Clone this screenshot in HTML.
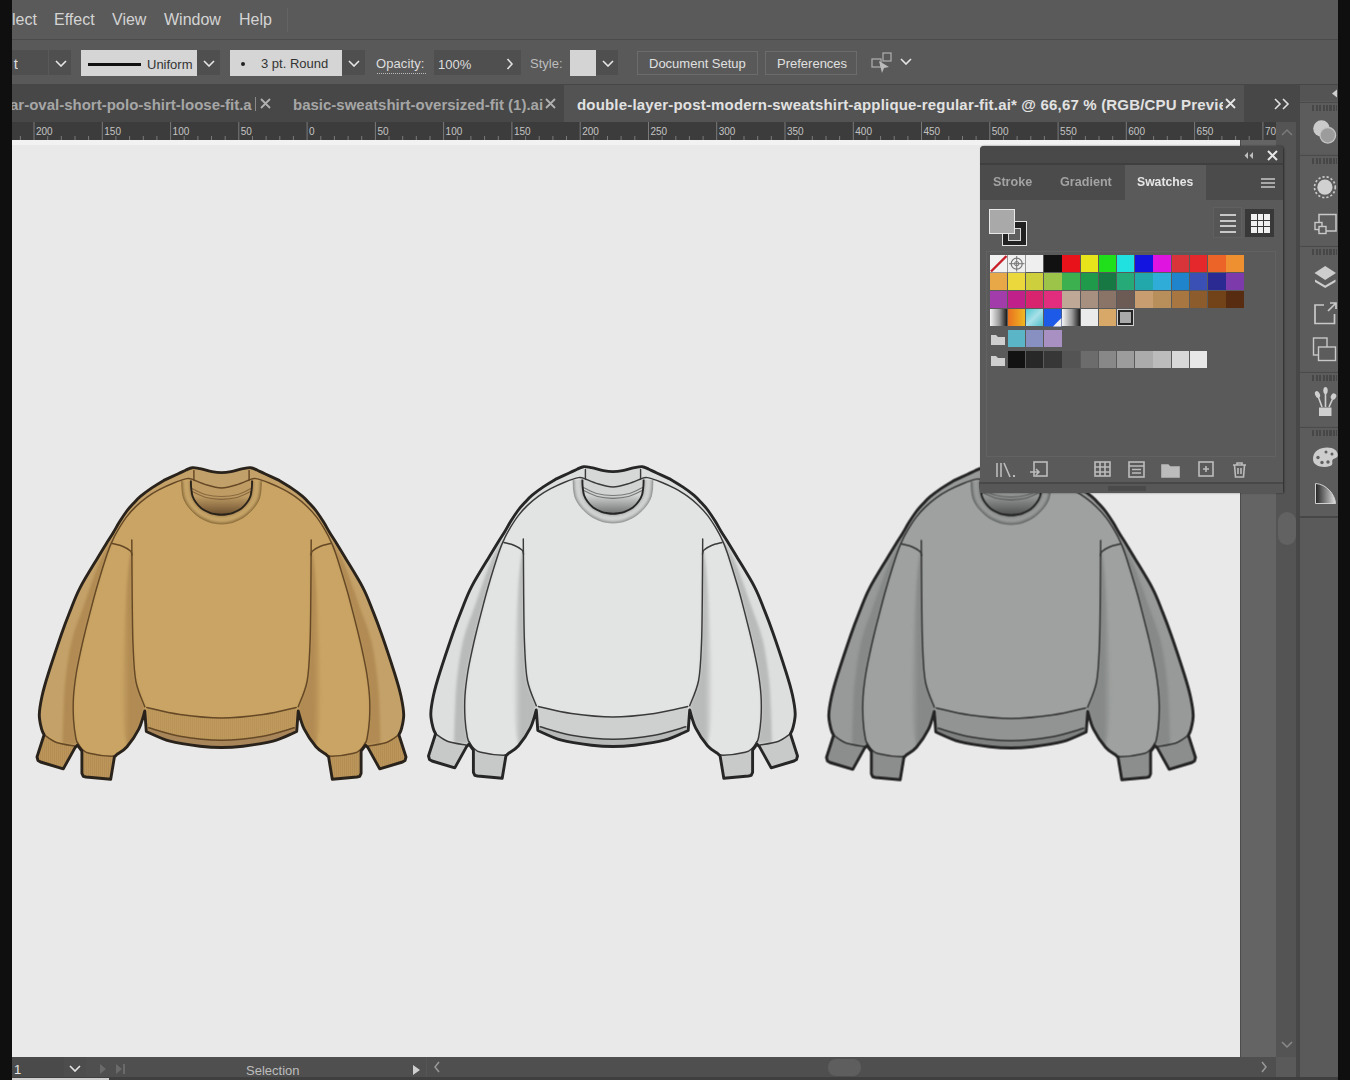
<!DOCTYPE html><html><head><meta charset="utf-8"><style>
*{margin:0;padding:0;box-sizing:border-box}
html,body{width:1350px;height:1080px;overflow:hidden;background:#0f0f0f;font-family:"Liberation Sans",sans-serif}
.a{position:absolute}
#menu{left:12px;top:0;width:1326px;height:40px;background:#5a5a5a;border-bottom:1px solid #4b4b4b}
#menu span{position:absolute;top:11px;font-size:16px;line-height:18px;color:#d4d4d4;white-space:nowrap}
#tool{left:12px;top:40px;width:1326px;height:45px;background:#595959;border-bottom:1px solid #464646}
.t13{font-size:13px;line-height:15px;white-space:nowrap;position:absolute}
#tabs{left:12px;top:85px;width:1326px;height:37px;background:#474747;overflow:hidden}
.tab{position:absolute;top:11px;font-size:15px;line-height:17px;font-weight:bold;color:#a6a6a6;white-space:nowrap}
#ruler{left:12px;top:122px;width:1264px;height:18px;background:#3c3c3c;overflow:hidden}
#canvas{left:12px;top:140px;width:1228px;height:917px;background:#e9e9e9;overflow:hidden}
#gray{left:1240px;top:140px;width:36px;height:917px;background:#646464;border-left:1px solid #4c4c4c}
#vscroll{left:1276px;top:122px;width:20px;height:935px;background:#545454}
#rpanel{left:1296px;top:85px;width:42px;height:995px;background:#5a5a5a;border-left:4px solid #474747}
#status{left:12px;top:1057px;width:1284px;height:23px;background:#4f4f4f}
</style></head><body><div id="root" class="a" style="left:0;top:0;width:1350px;height:1080px;overflow:hidden;background:#0f0f0f;filter:blur(0.45px)">
<div id="menu" class="a">
<span style="left:0px">lect</span>
<span style="left:42px">Effect</span>
<span style="left:100px">View</span>
<span style="left:152px">Window</span>
<span style="left:227px">Help</span>
<div class="a" style="left:275px;top:8px;width:1px;height:24px;background:#646464"></div>
</div>
<div id="tool" class="a">
<div class="a" style="left:0px;top:10px;width:36px;height:25px;background:#4f4f4f;"></div>
<div class="a" style="left:37px;top:10px;width:22px;height:25px;background:#4f4f4f;"></div>
<div class="a" style="left:0px;top:15px;font-size:15px;line-height:17px;color:#dcdcdc;width:6px;overflow:hidden;direction:rtl">t</div>
<svg class="a" style="left:43px;top:20px" width="12" height="7"><path d="M1 1 L6.0 6 L11 1" fill="none" stroke="#e6e6e6" stroke-width="1.6"/></svg>
<div class="a" style="left:69px;top:10px;width:116px;height:26px;background:#d5d5d5;"></div>
<div class="a" style="left:76px;top:23px;width:53px;height:3px;background:#111;"></div>
<div class="t13" style="left:135px;top:17px;color:#333">Uniform</div>
<div class="a" style="left:185px;top:10px;width:23px;height:25px;background:#4f4f4f;"></div>
<svg class="a" style="left:191px;top:20px" width="12" height="7"><path d="M1 1 L6.0 6 L11 1" fill="none" stroke="#e6e6e6" stroke-width="1.6"/></svg>
<div class="a" style="left:218px;top:10px;width:112px;height:26px;background:#d5d5d5;"></div>
<div class="a" style="left:229px;top:22px;width:4px;height:4px;border-radius:2px;background:#222"></div>
<div class="t13" style="left:249px;top:16px;color:#333">3 pt. Round</div>
<div class="a" style="left:330px;top:10px;width:23px;height:25px;background:#4f4f4f;"></div>
<svg class="a" style="left:336px;top:20px" width="12" height="7"><path d="M1 1 L6.0 6 L11 1" fill="none" stroke="#e6e6e6" stroke-width="1.6"/></svg>
<div class="t13" style="left:364px;top:16px;color:#dedede;letter-spacing:0.1px">Opacity:</div>
<div class="a" style="left:365px;top:33px;width:49px;height:0;border-top:1px dotted #bbb"></div>
<div class="a" style="left:422px;top:10px;width:64px;height:25px;background:#4f4f4f;"></div>
<div class="t13" style="left:426px;top:17px;color:#dedede">100%</div>
<div class="a" style="left:486px;top:10px;width:23px;height:25px;background:#4f4f4f;"></div>
<svg class="a" style="left:494px;top:18px" width="8" height="12"><path d="M1.5 1 L6 6 L1.5 11" fill="none" stroke="#e0e0e0" stroke-width="1.6"/></svg>
<div class="t13" style="left:518px;top:16px;color:#bdbdbd">Style:</div>
<div class="a" style="left:558px;top:10px;width:26px;height:26px;background:#d4d4d4;"></div>
<div class="a" style="left:584px;top:10px;width:22px;height:25px;background:#4f4f4f;"></div>
<svg class="a" style="left:590px;top:20px" width="12" height="7"><path d="M1 1 L6.0 6 L11 1" fill="none" stroke="#e6e6e6" stroke-width="1.6"/></svg>
<div class="a" style="left:625px;top:11px;width:121px;height:24px;background:transparent;border:1px solid #6c6c6c"></div>
<div class="t13" style="left:637px;top:16px;color:#e0e0e0">Document Setup</div>
<div class="a" style="left:753px;top:11px;width:92px;height:24px;background:transparent;border:1px solid #6c6c6c"></div>
<div class="t13" style="left:765px;top:16px;color:#e0e0e0">Preferences</div>
<svg class="a" style="left:859px;top:12px" width="24" height="22"><rect x="1" y="7" width="9" height="8" fill="none" stroke="#aaa" stroke-width="1.3"/><rect x="12" y="1" width="8" height="8" fill="none" stroke="#aaa" stroke-width="1.3"/><path d="M8 9 L18 15 L13 16 L11 21 Z" fill="#bbb"/></svg>
<svg class="a" style="left:888px;top:18px" width="12" height="7"><path d="M1 1 L6.0 6 L11 1" fill="none" stroke="#e6e6e6" stroke-width="1.6"/></svg>
</div>
<div id="tabs" class="a">
<div class="tab" style="left:-2px">ar-oval-short-polo-shirt-loose-fit.a</div>
<div class="a" style="left:243px;top:12px;width:1px;height:14px;background:#8a8a8a"></div>
<svg class="a" style="left:248px;top:13px" width="11" height="11"><path d="M1 1 L10 10 M10 1 L1 10" stroke="#b0b0b0" stroke-width="1.8"/></svg>
<div class="tab" style="left:281px">basic-sweatshirt-oversized-fit (1).ai</div>
<svg class="a" style="left:533px;top:13px" width="11" height="11"><path d="M1 1 L10 10 M10 1 L1 10" stroke="#b0b0b0" stroke-width="1.8"/></svg>
<div class="a" style="left:552px;top:0;width:680px;height:37px;background:#535353"></div>
<div class="a" style="left:552px;top:0;width:659px;height:37px;overflow:hidden"><div class="tab" style="left:13px;color:#e2e2e2;letter-spacing:0.18px">double-layer-post-modern-sweatshirt-applique-regular-fit.ai* @ 66,67 % (RGB/CPU Preview</div></div>
<svg class="a" style="left:1213px;top:13px" width="11" height="11"><path d="M1 1 L10 10 M10 1 L1 10" stroke="#e6e6e6" stroke-width="1.8"/></svg>
<svg class="a" style="left:1262px;top:13px" width="18" height="12"><path d="M1 1 L6 6 L1 11 M9 1 L14 6 L9 11" fill="none" stroke="#e0e0e0" stroke-width="1.6"/></svg>
</div>
<div id="ruler" class="a"><svg width="1264" height="18" style="position:absolute;left:0;top:0">
<line x1="-46.2" y1="0" x2="-46.2" y2="18" stroke="#7a7a7a" stroke-width="1"/><text x="-44.2" y="13" font-family="Liberation Sans" font-size="10" fill="#c4c4c4">250</text><line x1="-32.6" y1="14" x2="-32.6" y2="18" stroke="#7a7a7a" stroke-width="1"/><line x1="-18.9" y1="14" x2="-18.9" y2="18" stroke="#7a7a7a" stroke-width="1"/><line x1="-5.3" y1="14" x2="-5.3" y2="18" stroke="#7a7a7a" stroke-width="1"/><line x1="8.4" y1="14" x2="8.4" y2="18" stroke="#7a7a7a" stroke-width="1"/><line x1="22.0" y1="0" x2="22.0" y2="18" stroke="#7a7a7a" stroke-width="1"/><text x="24.0" y="13" font-family="Liberation Sans" font-size="10" fill="#c4c4c4">200</text><line x1="35.7" y1="14" x2="35.7" y2="18" stroke="#7a7a7a" stroke-width="1"/><line x1="49.3" y1="14" x2="49.3" y2="18" stroke="#7a7a7a" stroke-width="1"/><line x1="63.0" y1="14" x2="63.0" y2="18" stroke="#7a7a7a" stroke-width="1"/><line x1="76.6" y1="14" x2="76.6" y2="18" stroke="#7a7a7a" stroke-width="1"/><line x1="90.3" y1="0" x2="90.3" y2="18" stroke="#7a7a7a" stroke-width="1"/><text x="92.3" y="13" font-family="Liberation Sans" font-size="10" fill="#c4c4c4">150</text><line x1="103.9" y1="14" x2="103.9" y2="18" stroke="#7a7a7a" stroke-width="1"/><line x1="117.6" y1="14" x2="117.6" y2="18" stroke="#7a7a7a" stroke-width="1"/><line x1="131.3" y1="14" x2="131.3" y2="18" stroke="#7a7a7a" stroke-width="1"/><line x1="144.9" y1="14" x2="144.9" y2="18" stroke="#7a7a7a" stroke-width="1"/><line x1="158.6" y1="0" x2="158.6" y2="18" stroke="#7a7a7a" stroke-width="1"/><text x="160.6" y="13" font-family="Liberation Sans" font-size="10" fill="#c4c4c4">100</text><line x1="172.2" y1="14" x2="172.2" y2="18" stroke="#7a7a7a" stroke-width="1"/><line x1="185.9" y1="14" x2="185.9" y2="18" stroke="#7a7a7a" stroke-width="1"/><line x1="199.5" y1="14" x2="199.5" y2="18" stroke="#7a7a7a" stroke-width="1"/><line x1="213.2" y1="14" x2="213.2" y2="18" stroke="#7a7a7a" stroke-width="1"/><line x1="226.8" y1="0" x2="226.8" y2="18" stroke="#7a7a7a" stroke-width="1"/><text x="228.8" y="13" font-family="Liberation Sans" font-size="10" fill="#c4c4c4">50</text><line x1="240.5" y1="14" x2="240.5" y2="18" stroke="#7a7a7a" stroke-width="1"/><line x1="254.1" y1="14" x2="254.1" y2="18" stroke="#7a7a7a" stroke-width="1"/><line x1="267.8" y1="14" x2="267.8" y2="18" stroke="#7a7a7a" stroke-width="1"/><line x1="281.4" y1="14" x2="281.4" y2="18" stroke="#7a7a7a" stroke-width="1"/><line x1="295.1" y1="0" x2="295.1" y2="18" stroke="#7a7a7a" stroke-width="1"/><text x="297.1" y="13" font-family="Liberation Sans" font-size="10" fill="#c4c4c4">0</text><line x1="308.8" y1="14" x2="308.8" y2="18" stroke="#7a7a7a" stroke-width="1"/><line x1="322.4" y1="14" x2="322.4" y2="18" stroke="#7a7a7a" stroke-width="1"/><line x1="336.1" y1="14" x2="336.1" y2="18" stroke="#7a7a7a" stroke-width="1"/><line x1="349.7" y1="14" x2="349.7" y2="18" stroke="#7a7a7a" stroke-width="1"/><line x1="363.4" y1="0" x2="363.4" y2="18" stroke="#7a7a7a" stroke-width="1"/><text x="365.4" y="13" font-family="Liberation Sans" font-size="10" fill="#c4c4c4">50</text><line x1="377.0" y1="14" x2="377.0" y2="18" stroke="#7a7a7a" stroke-width="1"/><line x1="390.7" y1="14" x2="390.7" y2="18" stroke="#7a7a7a" stroke-width="1"/><line x1="404.3" y1="14" x2="404.3" y2="18" stroke="#7a7a7a" stroke-width="1"/><line x1="418.0" y1="14" x2="418.0" y2="18" stroke="#7a7a7a" stroke-width="1"/><line x1="431.6" y1="0" x2="431.6" y2="18" stroke="#7a7a7a" stroke-width="1"/><text x="433.6" y="13" font-family="Liberation Sans" font-size="10" fill="#c4c4c4">100</text><line x1="445.3" y1="14" x2="445.3" y2="18" stroke="#7a7a7a" stroke-width="1"/><line x1="458.9" y1="14" x2="458.9" y2="18" stroke="#7a7a7a" stroke-width="1"/><line x1="472.6" y1="14" x2="472.6" y2="18" stroke="#7a7a7a" stroke-width="1"/><line x1="486.3" y1="14" x2="486.3" y2="18" stroke="#7a7a7a" stroke-width="1"/><line x1="499.9" y1="0" x2="499.9" y2="18" stroke="#7a7a7a" stroke-width="1"/><text x="501.9" y="13" font-family="Liberation Sans" font-size="10" fill="#c4c4c4">150</text><line x1="513.6" y1="14" x2="513.6" y2="18" stroke="#7a7a7a" stroke-width="1"/><line x1="527.2" y1="14" x2="527.2" y2="18" stroke="#7a7a7a" stroke-width="1"/><line x1="540.9" y1="14" x2="540.9" y2="18" stroke="#7a7a7a" stroke-width="1"/><line x1="554.5" y1="14" x2="554.5" y2="18" stroke="#7a7a7a" stroke-width="1"/><line x1="568.2" y1="0" x2="568.2" y2="18" stroke="#7a7a7a" stroke-width="1"/><text x="570.2" y="13" font-family="Liberation Sans" font-size="10" fill="#c4c4c4">200</text><line x1="581.8" y1="14" x2="581.8" y2="18" stroke="#7a7a7a" stroke-width="1"/><line x1="595.5" y1="14" x2="595.5" y2="18" stroke="#7a7a7a" stroke-width="1"/><line x1="609.1" y1="14" x2="609.1" y2="18" stroke="#7a7a7a" stroke-width="1"/><line x1="622.8" y1="14" x2="622.8" y2="18" stroke="#7a7a7a" stroke-width="1"/><line x1="636.5" y1="0" x2="636.5" y2="18" stroke="#7a7a7a" stroke-width="1"/><text x="638.5" y="13" font-family="Liberation Sans" font-size="10" fill="#c4c4c4">250</text><line x1="650.1" y1="14" x2="650.1" y2="18" stroke="#7a7a7a" stroke-width="1"/><line x1="663.8" y1="14" x2="663.8" y2="18" stroke="#7a7a7a" stroke-width="1"/><line x1="677.4" y1="14" x2="677.4" y2="18" stroke="#7a7a7a" stroke-width="1"/><line x1="691.1" y1="14" x2="691.1" y2="18" stroke="#7a7a7a" stroke-width="1"/><line x1="704.7" y1="0" x2="704.7" y2="18" stroke="#7a7a7a" stroke-width="1"/><text x="706.7" y="13" font-family="Liberation Sans" font-size="10" fill="#c4c4c4">300</text><line x1="718.4" y1="14" x2="718.4" y2="18" stroke="#7a7a7a" stroke-width="1"/><line x1="732.0" y1="14" x2="732.0" y2="18" stroke="#7a7a7a" stroke-width="1"/><line x1="745.7" y1="14" x2="745.7" y2="18" stroke="#7a7a7a" stroke-width="1"/><line x1="759.3" y1="14" x2="759.3" y2="18" stroke="#7a7a7a" stroke-width="1"/><line x1="773.0" y1="0" x2="773.0" y2="18" stroke="#7a7a7a" stroke-width="1"/><text x="775.0" y="13" font-family="Liberation Sans" font-size="10" fill="#c4c4c4">350</text><line x1="786.6" y1="14" x2="786.6" y2="18" stroke="#7a7a7a" stroke-width="1"/><line x1="800.3" y1="14" x2="800.3" y2="18" stroke="#7a7a7a" stroke-width="1"/><line x1="814.0" y1="14" x2="814.0" y2="18" stroke="#7a7a7a" stroke-width="1"/><line x1="827.6" y1="14" x2="827.6" y2="18" stroke="#7a7a7a" stroke-width="1"/><line x1="841.3" y1="0" x2="841.3" y2="18" stroke="#7a7a7a" stroke-width="1"/><text x="843.3" y="13" font-family="Liberation Sans" font-size="10" fill="#c4c4c4">400</text><line x1="854.9" y1="14" x2="854.9" y2="18" stroke="#7a7a7a" stroke-width="1"/><line x1="868.6" y1="14" x2="868.6" y2="18" stroke="#7a7a7a" stroke-width="1"/><line x1="882.2" y1="14" x2="882.2" y2="18" stroke="#7a7a7a" stroke-width="1"/><line x1="895.9" y1="14" x2="895.9" y2="18" stroke="#7a7a7a" stroke-width="1"/><line x1="909.5" y1="0" x2="909.5" y2="18" stroke="#7a7a7a" stroke-width="1"/><text x="911.5" y="13" font-family="Liberation Sans" font-size="10" fill="#c4c4c4">450</text><line x1="923.2" y1="14" x2="923.2" y2="18" stroke="#7a7a7a" stroke-width="1"/><line x1="936.8" y1="14" x2="936.8" y2="18" stroke="#7a7a7a" stroke-width="1"/><line x1="950.5" y1="14" x2="950.5" y2="18" stroke="#7a7a7a" stroke-width="1"/><line x1="964.1" y1="14" x2="964.1" y2="18" stroke="#7a7a7a" stroke-width="1"/><line x1="977.8" y1="0" x2="977.8" y2="18" stroke="#7a7a7a" stroke-width="1"/><text x="979.8" y="13" font-family="Liberation Sans" font-size="10" fill="#c4c4c4">500</text><line x1="991.5" y1="14" x2="991.5" y2="18" stroke="#7a7a7a" stroke-width="1"/><line x1="1005.1" y1="14" x2="1005.1" y2="18" stroke="#7a7a7a" stroke-width="1"/><line x1="1018.8" y1="14" x2="1018.8" y2="18" stroke="#7a7a7a" stroke-width="1"/><line x1="1032.4" y1="14" x2="1032.4" y2="18" stroke="#7a7a7a" stroke-width="1"/><line x1="1046.1" y1="0" x2="1046.1" y2="18" stroke="#7a7a7a" stroke-width="1"/><text x="1048.1" y="13" font-family="Liberation Sans" font-size="10" fill="#c4c4c4">550</text><line x1="1059.7" y1="14" x2="1059.7" y2="18" stroke="#7a7a7a" stroke-width="1"/><line x1="1073.4" y1="14" x2="1073.4" y2="18" stroke="#7a7a7a" stroke-width="1"/><line x1="1087.0" y1="14" x2="1087.0" y2="18" stroke="#7a7a7a" stroke-width="1"/><line x1="1100.7" y1="14" x2="1100.7" y2="18" stroke="#7a7a7a" stroke-width="1"/><line x1="1114.3" y1="0" x2="1114.3" y2="18" stroke="#7a7a7a" stroke-width="1"/><text x="1116.3" y="13" font-family="Liberation Sans" font-size="10" fill="#c4c4c4">600</text><line x1="1128.0" y1="14" x2="1128.0" y2="18" stroke="#7a7a7a" stroke-width="1"/><line x1="1141.6" y1="14" x2="1141.6" y2="18" stroke="#7a7a7a" stroke-width="1"/><line x1="1155.3" y1="14" x2="1155.3" y2="18" stroke="#7a7a7a" stroke-width="1"/><line x1="1169.0" y1="14" x2="1169.0" y2="18" stroke="#7a7a7a" stroke-width="1"/><line x1="1182.6" y1="0" x2="1182.6" y2="18" stroke="#7a7a7a" stroke-width="1"/><text x="1184.6" y="13" font-family="Liberation Sans" font-size="10" fill="#c4c4c4">650</text><line x1="1196.3" y1="14" x2="1196.3" y2="18" stroke="#7a7a7a" stroke-width="1"/><line x1="1209.9" y1="14" x2="1209.9" y2="18" stroke="#7a7a7a" stroke-width="1"/><line x1="1223.6" y1="14" x2="1223.6" y2="18" stroke="#7a7a7a" stroke-width="1"/><line x1="1237.2" y1="14" x2="1237.2" y2="18" stroke="#7a7a7a" stroke-width="1"/><line x1="1250.9" y1="0" x2="1250.9" y2="18" stroke="#7a7a7a" stroke-width="1"/><text x="1252.9" y="13" font-family="Liberation Sans" font-size="10" fill="#c4c4c4">700</text><line x1="1264.5" y1="14" x2="1264.5" y2="18" stroke="#7a7a7a" stroke-width="1"/><line x1="1278.2" y1="14" x2="1278.2" y2="18" stroke="#7a7a7a" stroke-width="1"/><line x1="1291.8" y1="14" x2="1291.8" y2="18" stroke="#7a7a7a" stroke-width="1"/><line x1="1305.5" y1="14" x2="1305.5" y2="18" stroke="#7a7a7a" stroke-width="1"/>
</svg></div>
<div id="canvas" class="a"><div class="a" style="left:0;top:0;width:1228px;height:5px;background:#f2f2f2"></div>
<svg class="a" style="left:-12px;top:-140px" width="1240" height="1057" viewBox="0 0 1240 1057"><g transform="translate(0.00 0.00)"><defs><linearGradient id="fst" gradientUnits="userSpaceOnUse" x1="121" x2="135" y1="0" y2="0"><stop offset="0" stop-color="#b18b53" stop-opacity="0"/><stop offset="0.6" stop-color="#b18b53"/><stop offset="1" stop-color="#b18b53"/></linearGradient><linearGradient id="nkt" gradientUnits="userSpaceOnUse" x1="0" x2="0" y1="486" y2="515"><stop offset="0" stop-color="#bf9c64"/><stop offset="0.35" stop-color="#bf9c64"/><stop offset="1" stop-color="#6a4e2e"/></linearGradient><pattern id="rbt" patternUnits="userSpaceOnUse" width="2" height="10"><rect x="0" y="0" width="0.7" height="10" fill="#654826" opacity="0.10"/></pattern><filter id="blt" x="-20%" y="-20%" width="140%" height="140%"><feGaussianBlur stdDeviation="1.1"/></filter></defs><defs><clipPath id="cpt"><path d="M163.8 480.4 C166.1 479.3 174.0 475.7 177.7 474.0 C181.4 472.3 183.6 471.1 186.0 470.0 C188.4 468.9 190.0 467.9 192.3 467.7 C194.6 467.5 196.7 468.0 200.0 468.6 C203.3 469.2 208.4 470.9 212.0 471.6 C215.6 472.3 218.3 472.6 221.5 472.6 C224.7 472.6 227.4 472.3 231.0 471.6 C234.6 470.9 239.7 469.2 243.0 468.6 C246.3 468.0 248.4 467.5 250.7 467.7 C253.0 467.9 254.6 468.9 257.0 470.0 C259.4 471.1 261.6 472.3 265.3 474.0 C269.0 475.7 276.9 479.3 279.2 480.4 C281.2 481.6 287.3 485.3 291.2 487.9 C295.1 490.5 299.2 493.6 302.3 496.2 C305.4 498.8 307.4 501.1 309.7 503.6 C312.0 506.1 313.9 507.9 316.2 511.0 C318.5 514.1 321.3 518.4 323.6 522.1 C325.9 525.8 327.9 529.7 330.1 533.2 C332.3 536.8 334.2 539.5 336.6 543.4 C339.0 547.3 340.1 549.1 344.5 556.5 C348.9 563.9 358.2 578.6 363.0 587.8 C367.8 597.0 370.1 604.2 373.2 611.9 C376.3 619.6 377.9 623.8 381.5 634.0 C385.1 644.2 391.2 662.6 394.5 673.0 C397.8 683.4 399.5 689.3 401.0 696.3 C402.5 703.3 403.6 709.4 403.7 714.8 C403.8 720.2 402.3 725.4 401.5 728.7 C400.7 732.0 399.3 733.8 398.9 734.8 L406.0 757.0 L405.0 760.5 L402.5 762.0 L379.7 768.9 L367.8 747.4 L365.6 745.2 L361.1 751.0 L361.1 773.3 L359.7 776.3 L357.0 777.0 L332.3 779.3 L328.6 757.0 L325.6 754.0 C324.0 752.8 319.6 750.9 316.0 746.7 C312.4 742.5 307.1 734.9 304.1 728.9 C301.1 722.9 299.2 714.0 298.2 711.0 L296.7 731.5 C292.8 733.1 281.9 738.8 273.0 741.2 C264.1 743.7 251.6 745.2 243.0 746.2 C234.4 747.2 228.7 747.5 221.5 747.5 C214.3 747.5 208.6 747.2 200.0 746.2 C191.4 745.2 178.9 743.7 170.0 741.2 C161.1 738.8 150.2 733.1 146.3 731.5 L144.8 711.0 C143.8 714.0 141.9 722.9 138.9 728.9 C135.9 734.9 130.6 742.5 127.0 746.7 C123.4 750.9 119.0 752.8 117.4 754.0 L114.4 757.0 L110.7 779.3 L86.0 777.0 L83.3 776.3 L81.9 773.3 L81.9 751.0 L77.4 745.2 L75.2 747.4 L63.3 768.9 L40.5 762.0 L38.0 760.5 L37.0 757.0 L44.1 734.8 C43.7 733.8 42.3 732.0 41.5 728.7 C40.7 725.4 39.2 720.2 39.3 714.8 C39.4 709.4 40.5 703.3 42.0 696.3 C43.5 689.3 45.2 683.4 48.5 673.0 C51.8 662.6 58.0 644.2 61.5 634.0 C65.0 623.8 66.7 619.6 69.8 611.9 C72.9 604.2 75.2 597.0 80.0 587.8 C84.8 578.6 94.1 563.9 98.5 556.5 C102.9 549.1 104.0 547.3 106.4 543.4 C108.8 539.5 110.7 536.8 112.9 533.2 C115.1 529.7 117.1 525.8 119.4 522.1 C121.7 518.4 124.5 514.1 126.8 511.0 C129.1 507.9 131.0 506.1 133.3 503.6 C135.6 501.1 137.6 498.8 140.7 496.2 C143.8 493.6 148.0 490.5 151.8 487.9 C155.7 485.3 161.8 481.6 163.8 480.4 Z"/></clipPath></defs><path d="M163.8 480.4 C166.1 479.3 174.0 475.7 177.7 474.0 C181.4 472.3 183.6 471.1 186.0 470.0 C188.4 468.9 190.0 467.9 192.3 467.7 C194.6 467.5 196.7 468.0 200.0 468.6 C203.3 469.2 208.4 470.9 212.0 471.6 C215.6 472.3 218.3 472.6 221.5 472.6 C224.7 472.6 227.4 472.3 231.0 471.6 C234.6 470.9 239.7 469.2 243.0 468.6 C246.3 468.0 248.4 467.5 250.7 467.7 C253.0 467.9 254.6 468.9 257.0 470.0 C259.4 471.1 261.6 472.3 265.3 474.0 C269.0 475.7 276.9 479.3 279.2 480.4 C281.2 481.6 287.3 485.3 291.2 487.9 C295.1 490.5 299.2 493.6 302.3 496.2 C305.4 498.8 307.4 501.1 309.7 503.6 C312.0 506.1 313.9 507.9 316.2 511.0 C318.5 514.1 321.3 518.4 323.6 522.1 C325.9 525.8 327.9 529.7 330.1 533.2 C332.3 536.8 334.2 539.5 336.6 543.4 C339.0 547.3 340.1 549.1 344.5 556.5 C348.9 563.9 358.2 578.6 363.0 587.8 C367.8 597.0 370.1 604.2 373.2 611.9 C376.3 619.6 377.9 623.8 381.5 634.0 C385.1 644.2 391.2 662.6 394.5 673.0 C397.8 683.4 399.5 689.3 401.0 696.3 C402.5 703.3 403.6 709.4 403.7 714.8 C403.8 720.2 402.3 725.4 401.5 728.7 C400.7 732.0 399.3 733.8 398.9 734.8 L406.0 757.0 L405.0 760.5 L402.5 762.0 L379.7 768.9 L367.8 747.4 L365.6 745.2 L361.1 751.0 L361.1 773.3 L359.7 776.3 L357.0 777.0 L332.3 779.3 L328.6 757.0 L325.6 754.0 C324.0 752.8 319.6 750.9 316.0 746.7 C312.4 742.5 307.1 734.9 304.1 728.9 C301.1 722.9 299.2 714.0 298.2 711.0 L296.7 731.5 C292.8 733.1 281.9 738.8 273.0 741.2 C264.1 743.7 251.6 745.2 243.0 746.2 C234.4 747.2 228.7 747.5 221.5 747.5 C214.3 747.5 208.6 747.2 200.0 746.2 C191.4 745.2 178.9 743.7 170.0 741.2 C161.1 738.8 150.2 733.1 146.3 731.5 L144.8 711.0 C143.8 714.0 141.9 722.9 138.9 728.9 C135.9 734.9 130.6 742.5 127.0 746.7 C123.4 750.9 119.0 752.8 117.4 754.0 L114.4 757.0 L110.7 779.3 L86.0 777.0 L83.3 776.3 L81.9 773.3 L81.9 751.0 L77.4 745.2 L75.2 747.4 L63.3 768.9 L40.5 762.0 L38.0 760.5 L37.0 757.0 L44.1 734.8 C43.7 733.8 42.3 732.0 41.5 728.7 C40.7 725.4 39.2 720.2 39.3 714.8 C39.4 709.4 40.5 703.3 42.0 696.3 C43.5 689.3 45.2 683.4 48.5 673.0 C51.8 662.6 58.0 644.2 61.5 634.0 C65.0 623.8 66.7 619.6 69.8 611.9 C72.9 604.2 75.2 597.0 80.0 587.8 C84.8 578.6 94.1 563.9 98.5 556.5 C102.9 549.1 104.0 547.3 106.4 543.4 C108.8 539.5 110.7 536.8 112.9 533.2 C115.1 529.7 117.1 525.8 119.4 522.1 C121.7 518.4 124.5 514.1 126.8 511.0 C129.1 507.9 131.0 506.1 133.3 503.6 C135.6 501.1 137.6 498.8 140.7 496.2 C143.8 493.6 148.0 490.5 151.8 487.9 C155.7 485.3 161.8 481.6 163.8 480.4 Z" fill="#c9a464"/><path d="M163.8 480.4 C161.8 481.6 155.7 485.3 151.8 487.9 C148.0 490.5 143.8 493.6 140.7 496.2 C137.6 498.8 135.6 501.1 133.3 503.6 C131.0 506.1 129.1 507.9 126.8 511.0 C124.5 514.1 121.7 518.4 119.4 522.1 C117.1 525.8 115.1 529.7 112.9 533.2 C110.7 536.8 108.8 539.5 106.4 543.4 C104.0 547.3 102.9 549.1 98.5 556.5 C94.1 563.9 84.8 578.6 80.0 587.8 C75.2 597.0 72.9 604.2 69.8 611.9 C66.7 619.6 65.0 623.8 61.5 634.0 C58.0 644.2 51.8 662.6 48.5 673.0 C45.2 683.4 43.5 689.3 42.0 696.3 C40.5 703.3 39.4 709.4 39.3 714.8 C39.2 720.2 40.7 725.4 41.5 728.7 C42.3 732.0 43.7 733.8 44.1 734.8 L75.2 747.4 L78.5 744.5 C78.1 743.5 76.7 742.7 75.9 738.5 C75.1 734.3 73.9 726.4 73.5 719.4 C73.1 712.4 73.0 704.0 73.5 696.3 C74.0 688.6 75.1 680.7 76.3 673.0 C77.5 665.3 79.5 656.5 80.9 650.0 C82.3 643.5 83.0 640.4 84.6 634.0 C86.1 627.6 88.2 619.6 90.2 611.9 C92.2 604.2 93.9 597.5 96.7 587.8 C99.5 578.1 104.6 561.6 107.3 553.6 C110.0 545.6 110.9 544.0 112.9 539.7 C114.9 535.4 117.1 531.6 119.4 527.7 C121.7 523.9 124.0 520.2 126.8 516.6 C129.6 513.0 132.6 509.6 136.0 506.4 C139.4 503.1 143.2 499.9 147.1 497.1 C151.0 494.3 157.2 490.9 159.2 489.7 Z" fill="#c4a168" /><path d="M163.8 480.4 C161.8 481.6 155.7 485.3 151.8 487.9 C148.0 490.5 143.8 493.6 140.7 496.2 C137.6 498.8 135.6 501.1 133.3 503.6 C131.0 506.1 129.1 507.9 126.8 511.0 C124.5 514.1 121.7 518.4 119.4 522.1 C117.1 525.8 115.1 529.7 112.9 533.2 C110.7 536.8 108.8 539.5 106.4 543.4 C104.0 547.3 102.9 549.1 98.5 556.5 C94.1 563.9 84.8 578.6 80.0 587.8 C75.2 597.0 72.9 604.2 69.8 611.9 C66.7 619.6 65.0 623.8 61.5 634.0 C58.0 644.2 51.8 662.6 48.5 673.0 C45.2 683.4 43.5 689.3 42.0 696.3 C40.5 703.3 39.4 709.4 39.3 714.8 C39.2 720.2 40.7 725.4 41.5 728.7 C42.3 732.0 43.7 733.8 44.1 734.8 L75.2 747.4 L78.5 744.5 C78.1 743.5 76.7 742.7 75.9 738.5 C75.1 734.3 73.9 726.4 73.5 719.4 C73.1 712.4 73.0 704.0 73.5 696.3 C74.0 688.6 75.1 680.7 76.3 673.0 C77.5 665.3 79.5 656.5 80.9 650.0 C82.3 643.5 83.0 640.4 84.6 634.0 C86.1 627.6 88.2 619.6 90.2 611.9 C92.2 604.2 93.9 597.5 96.7 587.8 C99.5 578.1 104.6 561.6 107.3 553.6 C110.0 545.6 110.9 544.0 112.9 539.7 C114.9 535.4 117.1 531.6 119.4 527.7 C121.7 523.9 124.0 520.2 126.8 516.6 C129.6 513.0 132.6 509.6 136.0 506.4 C139.4 503.1 143.2 499.9 147.1 497.1 C151.0 494.3 157.2 490.9 159.2 489.7 Z" fill="#c4a168"  transform="matrix(-1 0 0 1 443.0 0)"/><path d="M163.8 480.4 C166.1 479.3 174.0 475.7 177.7 474.0 C181.4 472.3 183.6 471.1 186.0 470.0 C188.4 468.9 191.2 468.1 192.3 467.7 L193.5 479.7 C192.4 479.5 190.4 478.0 187.0 478.6 C183.6 479.2 177.7 481.4 173.1 483.2 C168.5 485.0 161.5 488.6 159.2 489.7 Z" fill="#c4a168" /><path d="M163.8 480.4 C166.1 479.3 174.0 475.7 177.7 474.0 C181.4 472.3 183.6 471.1 186.0 470.0 C188.4 468.9 191.2 468.1 192.3 467.7 L193.5 479.7 C192.4 479.5 190.4 478.0 187.0 478.6 C183.6 479.2 177.7 481.4 173.1 483.2 C168.5 485.0 161.5 488.6 159.2 489.7 Z" fill="#c4a168"  transform="matrix(-1 0 0 1 443.0 0)"/><g clip-path="url(#cpt)"><g filter="url(#blt)"><path d="M112.9 539.7 C112.0 542.0 110.0 545.6 107.3 553.6 C104.6 561.6 99.5 578.1 96.7 587.8 C93.9 597.5 92.2 604.2 90.2 611.9 C88.2 619.6 86.1 627.6 84.6 634.0 C83.0 640.4 82.3 643.5 80.9 650.0 C79.5 656.5 77.5 665.3 76.3 673.0 C75.1 680.7 74.0 688.6 73.5 696.3 C73.0 704.0 73.1 712.4 73.5 719.4 C73.9 726.4 75.2 734.2 75.9 738.5 C76.6 742.8 77.2 743.9 77.4 745.0 L62.5 743.5 C62.7 738.2 63.0 722.6 63.5 712.0 C64.0 701.4 64.1 692.0 65.5 680.0 C66.9 668.0 68.9 652.5 72.0 640.0 C75.1 627.5 79.7 617.3 84.0 605.0 C88.3 592.7 94.0 575.8 98.0 566.0 C102.0 556.2 105.5 550.4 108.0 546.0 C110.5 541.6 112.1 540.8 112.9 539.7 Z" fill="#b18b53" /><path d="M112.9 539.7 C112.0 542.0 110.0 545.6 107.3 553.6 C104.6 561.6 99.5 578.1 96.7 587.8 C93.9 597.5 92.2 604.2 90.2 611.9 C88.2 619.6 86.1 627.6 84.6 634.0 C83.0 640.4 82.3 643.5 80.9 650.0 C79.5 656.5 77.5 665.3 76.3 673.0 C75.1 680.7 74.0 688.6 73.5 696.3 C73.0 704.0 73.1 712.4 73.5 719.4 C73.9 726.4 75.2 734.2 75.9 738.5 C76.6 742.8 77.2 743.9 77.4 745.0 L62.5 743.5 C62.7 738.2 63.0 722.6 63.5 712.0 C64.0 701.4 64.1 692.0 65.5 680.0 C66.9 668.0 68.9 652.5 72.0 640.0 C75.1 627.5 79.7 617.3 84.0 605.0 C88.3 592.7 94.0 575.8 98.0 566.0 C102.0 556.2 105.5 550.4 108.0 546.0 C110.5 541.6 112.1 540.8 112.9 539.7 Z" fill="#b18b53"  transform="matrix(-1 0 0 1 443.0 0)"/><path d="M132.1 552.0 C132.1 560.0 132.0 584.6 132.2 600.0 C132.3 615.4 132.4 630.8 133.0 644.4 C133.6 658.0 133.9 671.1 135.9 681.5 C137.9 691.9 143.3 702.5 144.8 706.7 C143.8 710.4 141.9 722.2 138.9 728.9 C135.9 735.6 129.0 743.7 127.0 746.7 C126.4 743.1 124.2 734.5 123.5 725.0 C122.8 715.5 122.4 704.2 122.5 690.0 C122.6 675.8 123.3 656.7 124.0 640.0 C124.7 623.3 125.5 604.0 126.5 590.0 C127.5 576.0 129.1 562.3 130.0 556.0 C130.9 549.7 131.8 552.7 132.1 552.0 Z" fill="url(#fst)" /><path d="M132.1 552.0 C132.1 560.0 132.0 584.6 132.2 600.0 C132.3 615.4 132.4 630.8 133.0 644.4 C133.6 658.0 133.9 671.1 135.9 681.5 C137.9 691.9 143.3 702.5 144.8 706.7 C143.8 710.4 141.9 722.2 138.9 728.9 C135.9 735.6 129.0 743.7 127.0 746.7 C126.4 743.1 124.2 734.5 123.5 725.0 C122.8 715.5 122.4 704.2 122.5 690.0 C122.6 675.8 123.3 656.7 124.0 640.0 C124.7 623.3 125.5 604.0 126.5 590.0 C127.5 576.0 129.1 562.3 130.0 556.0 C130.9 549.7 131.8 552.7 132.1 552.0 Z" fill="url(#fst)"  transform="matrix(-1 0 0 1 443.0 0)"/></g></g><path d="M44.1 734.8 L37.0 757.0 L38.0 760.5 L40.5 762.0 L63.3 768.9 L75.2 747.4 L77.4 745.2 C76.9 745.3 78.0 746.5 74.4 746.0 C70.8 745.5 61.0 744.1 55.9 742.2 C50.8 740.3 46.1 736.0 44.1 734.8 Z" fill="#bb9559" /><path d="M44.1 734.8 L37.0 757.0 L38.0 760.5 L40.5 762.0 L63.3 768.9 L75.2 747.4 L77.4 745.2 C76.9 745.3 78.0 746.5 74.4 746.0 C70.8 745.5 61.0 744.1 55.9 742.2 C50.8 740.3 46.1 736.0 44.1 734.8 Z" fill="#bb9559"  transform="matrix(-1 0 0 1 443.0 0)"/><path d="M81.9 751.0 L81.9 773.3 L83.3 776.3 L86.0 777.0 L110.7 779.3 L114.4 757.0 L117.4 754.0 C116.4 754.4 116.2 756.4 111.5 756.3 C106.8 756.2 94.2 754.5 89.3 753.3 C84.4 752.1 84.0 750.8 82.0 749.0 C80.0 747.2 78.2 743.6 77.4 742.5 Z" fill="#bb9559" /><path d="M81.9 751.0 L81.9 773.3 L83.3 776.3 L86.0 777.0 L110.7 779.3 L114.4 757.0 L117.4 754.0 C116.4 754.4 116.2 756.4 111.5 756.3 C106.8 756.2 94.2 754.5 89.3 753.3 C84.4 752.1 84.0 750.8 82.0 749.0 C80.0 747.2 78.2 743.6 77.4 742.5 Z" fill="#bb9559"  transform="matrix(-1 0 0 1 443.0 0)"/><path d="M81.9 751.0 L81.9 773.3 L83.3 776.3 L86.0 777.0 L110.7 779.3 L114.4 757.0 L117.4 754.0 C116.4 754.4 116.2 756.4 111.5 756.3 C106.8 756.2 94.2 754.5 89.3 753.3 C84.4 752.1 84.0 750.8 82.0 749.0 C80.0 747.2 78.2 743.6 77.4 742.5 Z" fill="url(#rbt)" /><path d="M81.9 751.0 L81.9 773.3 L83.3 776.3 L86.0 777.0 L110.7 779.3 L114.4 757.0 L117.4 754.0 C116.4 754.4 116.2 756.4 111.5 756.3 C106.8 756.2 94.2 754.5 89.3 753.3 C84.4 752.1 84.0 750.8 82.0 749.0 C80.0 747.2 78.2 743.6 77.4 742.5 Z" fill="url(#rbt)"  transform="matrix(-1 0 0 1 443.0 0)"/><path d="M44.1 734.8 L37.0 757.0 L38.0 760.5 L40.5 762.0 L63.3 768.9 L75.2 747.4 L77.4 745.2 C76.9 745.3 78.0 746.5 74.4 746.0 C70.8 745.5 61.0 744.1 55.9 742.2 C50.8 740.3 46.1 736.0 44.1 734.8 Z" fill="url(#rbt)" /><path d="M44.1 734.8 L37.0 757.0 L38.0 760.5 L40.5 762.0 L63.3 768.9 L75.2 747.4 L77.4 745.2 C76.9 745.3 78.0 746.5 74.4 746.0 C70.8 745.5 61.0 744.1 55.9 742.2 C50.8 740.3 46.1 736.0 44.1 734.8 Z" fill="url(#rbt)"  transform="matrix(-1 0 0 1 443.0 0)"/><path d="M146.8 707.5 C152.3 708.7 167.6 712.8 180.0 714.5 C192.4 716.2 207.7 718.0 221.5 718.0 C235.3 718.0 250.6 716.2 263.0 714.5 C275.4 712.8 290.7 708.7 296.2 707.5 L296.7 731.5 C292.8 733.1 281.9 738.8 273.0 741.2 C264.1 743.7 251.6 745.2 243.0 746.2 C234.4 747.2 228.7 747.5 221.5 747.5 C214.3 747.5 208.6 747.2 200.0 746.2 C191.4 745.2 178.9 743.7 170.0 741.2 C161.1 738.8 150.2 733.1 146.3 731.5 Z" fill="#c09a5c"/><path d="M146.8 707.5 C152.3 708.7 167.6 712.8 180.0 714.5 C192.4 716.2 207.7 718.0 221.5 718.0 C235.3 718.0 250.6 716.2 263.0 714.5 C275.4 712.8 290.7 708.7 296.2 707.5 L296.7 731.5 C292.8 733.1 281.9 738.8 273.0 741.2 C264.1 743.7 251.6 745.2 243.0 746.2 C234.4 747.2 228.7 747.5 221.5 747.5 C214.3 747.5 208.6 747.2 200.0 746.2 C191.4 745.2 178.9 743.7 170.0 741.2 C161.1 738.8 150.2 733.1 146.3 731.5 Z" fill="url(#rbt)"/><path d="M148.7 727.8 C153.9 729.2 167.9 734.1 180.0 736.2 C192.1 738.3 207.7 740.2 221.5 740.2 C235.3 740.2 250.9 738.3 263.0 736.2 C275.1 734.1 289.1 729.2 294.3 727.8 L296.7 731.5 C292.8 733.1 281.9 738.8 273.0 741.2 C264.1 743.7 251.6 745.2 243.0 746.2 C234.4 747.2 228.7 747.5 221.5 747.5 C214.3 747.5 208.6 747.2 200.0 746.2 C191.4 745.2 178.9 743.7 170.0 741.2 C161.1 738.8 150.2 733.1 146.3 731.5 Z" fill="#a8865a"/><path d="M193.5 468.0 C194.8 468.2 197.9 468.5 201.0 469.2 C204.1 469.9 208.6 471.4 212.0 472.0 C215.4 472.6 218.3 473.0 221.5 473.0 C224.7 473.0 227.6 472.6 231.0 472.0 C234.4 471.4 238.9 469.9 242.0 469.2 C245.1 468.5 248.2 468.2 249.5 468.0 L249.5 479.7 C247.2 480.6 240.7 483.6 236.0 485.0 C231.3 486.4 226.3 487.9 221.5 487.9 C216.7 487.9 211.7 486.4 207.0 485.0 C202.3 483.6 195.8 480.6 193.5 479.7 Z" fill="#c2a06a"/><path d="M190.9 480.5 C190.9 481.8 190.9 485.4 191.2 488.0 C191.5 490.6 191.7 493.6 192.5 496.0 C193.3 498.4 194.5 500.4 196.0 502.5 C197.5 504.6 199.3 506.7 201.6 508.4 C203.9 510.1 207.6 511.8 210.0 512.8 C212.4 513.8 214.1 513.9 216.0 514.2 C217.9 514.5 219.7 514.7 221.5 514.7 C223.3 514.7 225.1 514.5 227.0 514.2 C228.9 513.9 230.6 513.8 233.0 512.8 C235.4 511.8 239.1 510.1 241.4 508.4 C243.7 506.7 245.5 504.6 247.0 502.5 C248.5 500.4 249.7 498.4 250.5 496.0 C251.3 493.6 251.5 490.6 251.8 488.0 C252.1 485.4 252.1 481.8 252.1 480.5 L249.5 479.7 C247.2 480.6 240.7 483.6 236.0 485.0 C231.3 486.4 226.3 487.9 221.5 487.9 C216.7 487.9 211.7 486.4 207.0 485.0 C202.3 483.6 195.8 480.6 193.5 479.7 Z" fill="url(#nkt)"/><defs><clipPath id="rct"><path d="M181.6 481.0 C181.7 482.5 181.7 487.2 182.0 490.0 C182.3 492.8 182.6 495.5 183.4 498.0 C184.2 500.5 185.5 502.7 187.0 505.0 C188.5 507.3 190.3 509.5 192.5 511.6 C194.7 513.7 197.1 515.9 200.0 517.7 C202.9 519.5 207.3 521.3 210.0 522.3 C212.7 523.3 214.1 523.2 216.0 523.5 C217.9 523.8 219.7 524.0 221.5 524.0 C223.3 524.0 225.1 523.8 227.0 523.5 C228.9 523.2 230.3 523.3 233.0 522.3 C235.7 521.3 240.1 519.5 243.0 517.7 C245.9 515.9 248.3 513.7 250.5 511.6 C252.7 509.5 254.5 507.3 256.0 505.0 C257.5 502.7 258.8 500.5 259.6 498.0 C260.4 495.5 260.7 492.8 261.0 490.0 C261.3 487.2 261.3 482.5 261.4 481.0 L252.1 480.5 C252.1 481.8 252.1 485.4 251.8 488.0 C251.5 490.6 251.3 493.6 250.5 496.0 C249.7 498.4 248.5 500.4 247.0 502.5 C245.5 504.6 243.7 506.7 241.4 508.4 C239.1 510.1 235.4 511.8 233.0 512.8 C230.6 513.8 228.9 513.9 227.0 514.2 C225.1 514.5 223.3 514.7 221.5 514.7 C219.7 514.7 217.9 514.5 216.0 514.2 C214.1 513.9 212.4 513.8 210.0 512.8 C207.6 511.8 203.9 510.1 201.6 508.4 C199.3 506.7 197.5 504.6 196.0 502.5 C194.5 500.4 193.3 498.4 192.5 496.0 C191.7 493.6 191.5 490.6 191.2 488.0 C190.9 485.4 190.9 481.8 190.9 480.5 Z"/></clipPath></defs><path d="M181.6 481.0 C181.7 482.5 181.7 487.2 182.0 490.0 C182.3 492.8 182.6 495.5 183.4 498.0 C184.2 500.5 185.5 502.7 187.0 505.0 C188.5 507.3 190.3 509.5 192.5 511.6 C194.7 513.7 197.1 515.9 200.0 517.7 C202.9 519.5 207.3 521.3 210.0 522.3 C212.7 523.3 214.1 523.2 216.0 523.5 C217.9 523.8 219.7 524.0 221.5 524.0 C223.3 524.0 225.1 523.8 227.0 523.5 C228.9 523.2 230.3 523.3 233.0 522.3 C235.7 521.3 240.1 519.5 243.0 517.7 C245.9 515.9 248.3 513.7 250.5 511.6 C252.7 509.5 254.5 507.3 256.0 505.0 C257.5 502.7 258.8 500.5 259.6 498.0 C260.4 495.5 260.7 492.8 261.0 490.0 C261.3 487.2 261.3 482.5 261.4 481.0 L252.1 480.5 C252.1 481.8 252.1 485.4 251.8 488.0 C251.5 490.6 251.3 493.6 250.5 496.0 C249.7 498.4 248.5 500.4 247.0 502.5 C245.5 504.6 243.7 506.7 241.4 508.4 C239.1 510.1 235.4 511.8 233.0 512.8 C230.6 513.8 228.9 513.9 227.0 514.2 C225.1 514.5 223.3 514.7 221.5 514.7 C219.7 514.7 217.9 514.5 216.0 514.2 C214.1 513.9 212.4 513.8 210.0 512.8 C207.6 511.8 203.9 510.1 201.6 508.4 C199.3 506.7 197.5 504.6 196.0 502.5 C194.5 500.4 193.3 498.4 192.5 496.0 C191.7 493.6 191.5 490.6 191.2 488.0 C190.9 485.4 190.9 481.8 190.9 480.5 Z" fill="#c6a468"/><g clip-path="url(#rct)" filter="url(#blt)"><path d="M181.6 481.0 C181.7 482.5 181.7 487.2 182.0 490.0 C182.3 492.8 182.6 495.5 183.4 498.0 C184.2 500.5 185.5 502.7 187.0 505.0 C188.5 507.3 190.3 509.5 192.5 511.6 C194.7 513.7 197.1 515.9 200.0 517.7 C202.9 519.5 207.3 521.3 210.0 522.3 C212.7 523.3 214.1 523.2 216.0 523.5 C217.9 523.8 219.7 524.0 221.5 524.0 C223.3 524.0 225.1 523.8 227.0 523.5 C228.9 523.2 230.3 523.3 233.0 522.3 C235.7 521.3 240.1 519.5 243.0 517.7 C245.9 515.9 248.3 513.7 250.5 511.6 C252.7 509.5 254.5 507.3 256.0 505.0 C257.5 502.7 258.8 500.5 259.6 498.0 C260.4 495.5 260.7 492.8 261.0 490.0 C261.3 487.2 261.3 482.5 261.4 481.0" fill="none" stroke="#8a6a3a" stroke-width="3.2" opacity="0.8"/><path d="M190.9 480.5 C190.9 481.8 190.9 485.4 191.2 488.0 C191.5 490.6 191.7 493.6 192.5 496.0 C193.3 498.4 194.5 500.4 196.0 502.5 C197.5 504.6 199.3 506.7 201.6 508.4 C203.9 510.1 207.6 511.8 210.0 512.8 C212.4 513.8 214.1 513.9 216.0 514.2 C217.9 514.5 219.7 514.7 221.5 514.7 C223.3 514.7 225.1 514.5 227.0 514.2 C228.9 513.9 230.6 513.8 233.0 512.8 C235.4 511.8 239.1 510.1 241.4 508.4 C243.7 506.7 245.5 504.6 247.0 502.5 C248.5 500.4 249.7 498.4 250.5 496.0 C251.3 493.6 251.5 490.6 251.8 488.0 C252.1 485.4 252.1 481.8 252.1 480.5" fill="none" stroke="#8a6a3a" stroke-width="3.5" opacity="0.6"/></g><path d="M181.6 481.0 C181.7 482.5 181.7 487.2 182.0 490.0 C182.3 492.8 182.6 495.5 183.4 498.0 C184.2 500.5 185.5 502.7 187.0 505.0 C188.5 507.3 190.3 509.5 192.5 511.6 C194.7 513.7 197.1 515.9 200.0 517.7 C202.9 519.5 207.3 521.3 210.0 522.3 C212.7 523.3 214.1 523.2 216.0 523.5 C217.9 523.8 219.7 524.0 221.5 524.0 C223.3 524.0 225.1 523.8 227.0 523.5 C228.9 523.2 230.3 523.3 233.0 522.3 C235.7 521.3 240.1 519.5 243.0 517.7 C245.9 515.9 248.3 513.7 250.5 511.6 C252.7 509.5 254.5 507.3 256.0 505.0 C257.5 502.7 258.8 500.5 259.6 498.0 C260.4 495.5 260.7 492.8 261.0 490.0 C261.3 487.2 261.3 482.5 261.4 481.0" fill="none" stroke="#8a6a3a" stroke-width="1" opacity="0.8"/><g fill="none" stroke="#654826" stroke-width="1.45" stroke-linecap="round"><path d="M78.5 744.5 C78.1 743.5 76.7 742.7 75.9 738.5 C75.1 734.3 73.9 726.4 73.5 719.4 C73.1 712.4 73.0 704.0 73.5 696.3 C74.0 688.6 75.1 680.7 76.3 673.0 C77.5 665.3 79.5 656.5 80.9 650.0 C82.3 643.5 83.0 640.4 84.6 634.0 C86.1 627.6 88.2 619.6 90.2 611.9 C92.2 604.2 93.9 597.5 96.7 587.8 C99.5 578.1 104.6 561.6 107.3 553.6 C110.0 545.6 110.9 544.0 112.9 539.7 C114.9 535.4 117.1 531.6 119.4 527.7 C121.7 523.9 124.0 520.2 126.8 516.6 C129.6 513.0 132.6 509.6 136.0 506.4 C139.4 503.1 143.2 499.9 147.1 497.1 C151.0 494.3 154.9 492.0 159.2 489.7 C163.5 487.4 168.5 485.0 173.1 483.2 C177.7 481.4 183.6 479.2 187.0 478.6 C190.4 478.0 192.4 479.5 193.5 479.7 C195.8 480.6 202.3 483.6 207.0 485.0 C211.7 486.4 216.7 487.9 221.5 487.9 C226.3 487.9 231.3 486.4 236.0 485.0 C240.7 483.6 247.2 480.6 249.5 479.7 C250.6 479.5 252.6 478.0 256.0 478.6 C259.4 479.2 265.3 481.4 269.9 483.2 C274.5 485.0 279.5 487.4 283.8 489.7 C288.1 492.0 292.0 494.3 295.9 497.1 C299.8 499.9 303.6 503.1 307.0 506.4 C310.4 509.6 313.4 513.0 316.2 516.6 C319.0 520.2 321.3 523.9 323.6 527.7 C325.9 531.6 328.1 535.4 330.1 539.7 C332.1 544.0 333.0 545.6 335.7 553.6 C338.4 561.6 343.4 578.1 346.3 587.8 C349.2 597.5 350.8 604.2 352.8 611.9 C354.8 619.6 356.8 627.6 358.4 634.0 C359.9 640.4 360.7 643.5 362.1 650.0 C363.5 656.5 365.5 665.3 366.7 673.0 C367.9 680.7 369.0 688.6 369.5 696.3 C370.0 704.0 369.9 712.4 369.5 719.4 C369.1 726.4 367.9 734.3 367.1 738.5 C366.3 742.7 364.9 743.5 364.5 744.5"/><path d="M131.8 540.0 C131.9 550.0 132.0 582.6 132.2 600.0 C132.4 617.4 132.4 630.8 133.0 644.4 C133.6 658.0 133.9 671.1 135.9 681.5 C137.9 691.9 143.3 702.5 144.8 706.7 M311.2 540.0 C311.1 550.0 311.0 582.6 310.8 600.0 C310.6 617.4 310.6 630.8 310.0 644.4 C309.4 658.0 309.1 671.1 307.1 681.5 C305.1 691.9 299.7 702.5 298.2 706.7"/><path d="M112.5 543.5 C114.2 544.0 120.0 545.2 123.0 546.5 C126.0 547.8 129.0 549.6 130.5 551.0 C132.0 552.4 131.8 554.3 132.0 555.0 M330.5 543.5 C328.8 544.0 323.0 545.2 320.0 546.5 C317.0 547.8 314.0 549.6 312.5 551.0 C311.0 552.4 311.2 554.3 311.0 555.0"/><path d="M146.8 707.5 C152.3 708.7 167.6 712.8 180.0 714.5 C192.4 716.2 207.7 718.0 221.5 718.0 C235.3 718.0 250.6 716.2 263.0 714.5 C275.4 712.8 290.7 708.7 296.2 707.5"/><path d="M148.7 727.8 C153.9 729.2 167.9 734.1 180.0 736.2 C192.1 738.3 207.7 740.2 221.5 740.2 C235.3 740.2 250.9 738.3 263.0 736.2 C275.1 734.1 289.1 729.2 294.3 727.8"/><path d="M193.9 470.5 V480 M249.1 470.5 V480"/><path d="M77.4 742.5 C78.2 743.6 80.0 747.2 82.0 749.0 C84.0 750.8 84.4 752.1 89.3 753.3 C94.2 754.5 106.8 756.2 111.5 756.3 C116.2 756.4 116.4 754.4 117.4 754.0 M365.6 742.5 C364.8 743.6 363.0 747.2 361.0 749.0 C359.0 750.8 358.6 752.1 353.7 753.3 C348.8 754.5 336.2 756.2 331.5 756.3 C326.8 756.4 326.6 754.4 325.6 754.0"/><path d="M44.1 734.8 C46.1 736.0 50.8 740.3 55.9 742.2 C61.0 744.1 71.3 745.4 74.4 746.0 M398.9 734.8 C396.9 736.0 392.2 740.3 387.1 742.2 C382.1 744.1 371.7 745.4 368.6 746.0"/><path d="M192.0 488.5 C194.2 489.5 200.1 493.2 205.0 494.5 C209.9 495.8 216.0 496.5 221.5 496.5 C227.0 496.5 233.1 495.8 238.0 494.5 C242.9 493.2 248.8 489.5 251.0 488.5" stroke-width="1.16" opacity="0.6"/><path d="M192.3 491.5 C194.6 492.5 201.1 496.2 206.0 497.5 C210.9 498.8 216.3 499.3 221.5 499.3 C226.7 499.3 232.1 498.8 237.0 497.5 C241.9 496.2 248.4 492.5 250.7 491.5" stroke-width="1.16" opacity="0.6"/></g><path d="M190.9 480.5 C190.9 481.8 190.9 485.4 191.2 488.0 C191.5 490.6 191.7 493.6 192.5 496.0 C193.3 498.4 194.5 500.4 196.0 502.5 C197.5 504.6 199.3 506.7 201.6 508.4 C203.9 510.1 207.6 511.8 210.0 512.8 C212.4 513.8 214.1 513.9 216.0 514.2 C217.9 514.5 219.7 514.7 221.5 514.7 C223.3 514.7 225.1 514.5 227.0 514.2 C228.9 513.9 230.6 513.8 233.0 512.8 C235.4 511.8 239.1 510.1 241.4 508.4 C243.7 506.7 245.5 504.6 247.0 502.5 C248.5 500.4 249.7 498.4 250.5 496.0 C251.3 493.6 251.5 490.6 251.8 488.0 C252.1 485.4 252.1 481.8 252.1 480.5" fill="none" stroke="#2a231b" stroke-width="1.885"/><path d="M163.8 480.4 C166.1 479.3 174.0 475.7 177.7 474.0 C181.4 472.3 183.6 471.1 186.0 470.0 C188.4 468.9 190.0 467.9 192.3 467.7 C194.6 467.5 196.7 468.0 200.0 468.6 C203.3 469.2 208.4 470.9 212.0 471.6 C215.6 472.3 218.3 472.6 221.5 472.6 C224.7 472.6 227.4 472.3 231.0 471.6 C234.6 470.9 239.7 469.2 243.0 468.6 C246.3 468.0 248.4 467.5 250.7 467.7 C253.0 467.9 254.6 468.9 257.0 470.0 C259.4 471.1 261.6 472.3 265.3 474.0 C269.0 475.7 276.9 479.3 279.2 480.4 C281.2 481.6 287.3 485.3 291.2 487.9 C295.1 490.5 299.2 493.6 302.3 496.2 C305.4 498.8 307.4 501.1 309.7 503.6 C312.0 506.1 313.9 507.9 316.2 511.0 C318.5 514.1 321.3 518.4 323.6 522.1 C325.9 525.8 327.9 529.7 330.1 533.2 C332.3 536.8 334.2 539.5 336.6 543.4 C339.0 547.3 340.1 549.1 344.5 556.5 C348.9 563.9 358.2 578.6 363.0 587.8 C367.8 597.0 370.1 604.2 373.2 611.9 C376.3 619.6 377.9 623.8 381.5 634.0 C385.1 644.2 391.2 662.6 394.5 673.0 C397.8 683.4 399.5 689.3 401.0 696.3 C402.5 703.3 403.6 709.4 403.7 714.8 C403.8 720.2 402.3 725.4 401.5 728.7 C400.7 732.0 399.3 733.8 398.9 734.8 L406.0 757.0 L405.0 760.5 L402.5 762.0 L379.7 768.9 L367.8 747.4 L365.6 745.2 L361.1 751.0 L361.1 773.3 L359.7 776.3 L357.0 777.0 L332.3 779.3 L328.6 757.0 L325.6 754.0 C324.0 752.8 319.6 750.9 316.0 746.7 C312.4 742.5 307.1 734.9 304.1 728.9 C301.1 722.9 299.2 714.0 298.2 711.0 L296.7 731.5 C292.8 733.1 281.9 738.8 273.0 741.2 C264.1 743.7 251.6 745.2 243.0 746.2 C234.4 747.2 228.7 747.5 221.5 747.5 C214.3 747.5 208.6 747.2 200.0 746.2 C191.4 745.2 178.9 743.7 170.0 741.2 C161.1 738.8 150.2 733.1 146.3 731.5 L144.8 711.0 C143.8 714.0 141.9 722.9 138.9 728.9 C135.9 734.9 130.6 742.5 127.0 746.7 C123.4 750.9 119.0 752.8 117.4 754.0 L114.4 757.0 L110.7 779.3 L86.0 777.0 L83.3 776.3 L81.9 773.3 L81.9 751.0 L77.4 745.2 L75.2 747.4 L63.3 768.9 L40.5 762.0 L38.0 760.5 L37.0 757.0 L44.1 734.8 C43.7 733.8 42.3 732.0 41.5 728.7 C40.7 725.4 39.2 720.2 39.3 714.8 C39.4 709.4 40.5 703.3 42.0 696.3 C43.5 689.3 45.2 683.4 48.5 673.0 C51.8 662.6 58.0 644.2 61.5 634.0 C65.0 623.8 66.7 619.6 69.8 611.9 C72.9 604.2 75.2 597.0 80.0 587.8 C84.8 578.6 94.1 563.9 98.5 556.5 C102.9 549.1 104.0 547.3 106.4 543.4 C108.8 539.5 110.7 536.8 112.9 533.2 C115.1 529.7 117.1 525.8 119.4 522.1 C121.7 518.4 124.5 514.1 126.8 511.0 C129.1 507.9 131.0 506.1 133.3 503.6 C135.6 501.1 137.6 498.8 140.7 496.2 C143.8 493.6 148.0 490.5 151.8 487.9 C155.7 485.3 161.8 481.6 163.8 480.4 Z" fill="none" stroke="#2a231b" stroke-width="2.9" stroke-linejoin="round"/></g><g transform="translate(391.50 -1.00)"><defs><linearGradient id="fsw" gradientUnits="userSpaceOnUse" x1="121" x2="135" y1="0" y2="0"><stop offset="0" stop-color="#b9bbba" stop-opacity="0"/><stop offset="0.6" stop-color="#b9bbba"/><stop offset="1" stop-color="#b9bbba"/></linearGradient><linearGradient id="nkw" gradientUnits="userSpaceOnUse" x1="0" x2="0" y1="486" y2="515"><stop offset="0" stop-color="#d2d4d3"/><stop offset="0.35" stop-color="#d2d4d3"/><stop offset="1" stop-color="#707271"/></linearGradient><pattern id="rbw" patternUnits="userSpaceOnUse" width="2" height="10"><rect x="0" y="0" width="0.7" height="10" fill="#3a3a3a" opacity="0.10"/></pattern><filter id="blw" x="-20%" y="-20%" width="140%" height="140%"><feGaussianBlur stdDeviation="1.1"/></filter></defs><defs><clipPath id="cpw"><path d="M163.8 480.4 C166.1 479.3 174.0 475.7 177.7 474.0 C181.4 472.3 183.6 471.1 186.0 470.0 C188.4 468.9 190.0 467.9 192.3 467.7 C194.6 467.5 196.7 468.0 200.0 468.6 C203.3 469.2 208.4 470.9 212.0 471.6 C215.6 472.3 218.3 472.6 221.5 472.6 C224.7 472.6 227.4 472.3 231.0 471.6 C234.6 470.9 239.7 469.2 243.0 468.6 C246.3 468.0 248.4 467.5 250.7 467.7 C253.0 467.9 254.6 468.9 257.0 470.0 C259.4 471.1 261.6 472.3 265.3 474.0 C269.0 475.7 276.9 479.3 279.2 480.4 C281.2 481.6 287.3 485.3 291.2 487.9 C295.1 490.5 299.2 493.6 302.3 496.2 C305.4 498.8 307.4 501.1 309.7 503.6 C312.0 506.1 313.9 507.9 316.2 511.0 C318.5 514.1 321.3 518.4 323.6 522.1 C325.9 525.8 327.9 529.7 330.1 533.2 C332.3 536.8 334.2 539.5 336.6 543.4 C339.0 547.3 340.1 549.1 344.5 556.5 C348.9 563.9 358.2 578.6 363.0 587.8 C367.8 597.0 370.1 604.2 373.2 611.9 C376.3 619.6 377.9 623.8 381.5 634.0 C385.1 644.2 391.2 662.6 394.5 673.0 C397.8 683.4 399.5 689.3 401.0 696.3 C402.5 703.3 403.6 709.4 403.7 714.8 C403.8 720.2 402.3 725.4 401.5 728.7 C400.7 732.0 399.3 733.8 398.9 734.8 L406.0 757.0 L405.0 760.5 L402.5 762.0 L379.7 768.9 L367.8 747.4 L365.6 745.2 L361.1 751.0 L361.1 773.3 L359.7 776.3 L357.0 777.0 L332.3 779.3 L328.6 757.0 L325.6 754.0 C324.0 752.8 319.6 750.9 316.0 746.7 C312.4 742.5 307.1 734.9 304.1 728.9 C301.1 722.9 299.2 714.0 298.2 711.0 L296.7 731.5 C292.8 733.1 281.9 738.8 273.0 741.2 C264.1 743.7 251.6 745.2 243.0 746.2 C234.4 747.2 228.7 747.5 221.5 747.5 C214.3 747.5 208.6 747.2 200.0 746.2 C191.4 745.2 178.9 743.7 170.0 741.2 C161.1 738.8 150.2 733.1 146.3 731.5 L144.8 711.0 C143.8 714.0 141.9 722.9 138.9 728.9 C135.9 734.9 130.6 742.5 127.0 746.7 C123.4 750.9 119.0 752.8 117.4 754.0 L114.4 757.0 L110.7 779.3 L86.0 777.0 L83.3 776.3 L81.9 773.3 L81.9 751.0 L77.4 745.2 L75.2 747.4 L63.3 768.9 L40.5 762.0 L38.0 760.5 L37.0 757.0 L44.1 734.8 C43.7 733.8 42.3 732.0 41.5 728.7 C40.7 725.4 39.2 720.2 39.3 714.8 C39.4 709.4 40.5 703.3 42.0 696.3 C43.5 689.3 45.2 683.4 48.5 673.0 C51.8 662.6 58.0 644.2 61.5 634.0 C65.0 623.8 66.7 619.6 69.8 611.9 C72.9 604.2 75.2 597.0 80.0 587.8 C84.8 578.6 94.1 563.9 98.5 556.5 C102.9 549.1 104.0 547.3 106.4 543.4 C108.8 539.5 110.7 536.8 112.9 533.2 C115.1 529.7 117.1 525.8 119.4 522.1 C121.7 518.4 124.5 514.1 126.8 511.0 C129.1 507.9 131.0 506.1 133.3 503.6 C135.6 501.1 137.6 498.8 140.7 496.2 C143.8 493.6 148.0 490.5 151.8 487.9 C155.7 485.3 161.8 481.6 163.8 480.4 Z"/></clipPath></defs><path d="M163.8 480.4 C166.1 479.3 174.0 475.7 177.7 474.0 C181.4 472.3 183.6 471.1 186.0 470.0 C188.4 468.9 190.0 467.9 192.3 467.7 C194.6 467.5 196.7 468.0 200.0 468.6 C203.3 469.2 208.4 470.9 212.0 471.6 C215.6 472.3 218.3 472.6 221.5 472.6 C224.7 472.6 227.4 472.3 231.0 471.6 C234.6 470.9 239.7 469.2 243.0 468.6 C246.3 468.0 248.4 467.5 250.7 467.7 C253.0 467.9 254.6 468.9 257.0 470.0 C259.4 471.1 261.6 472.3 265.3 474.0 C269.0 475.7 276.9 479.3 279.2 480.4 C281.2 481.6 287.3 485.3 291.2 487.9 C295.1 490.5 299.2 493.6 302.3 496.2 C305.4 498.8 307.4 501.1 309.7 503.6 C312.0 506.1 313.9 507.9 316.2 511.0 C318.5 514.1 321.3 518.4 323.6 522.1 C325.9 525.8 327.9 529.7 330.1 533.2 C332.3 536.8 334.2 539.5 336.6 543.4 C339.0 547.3 340.1 549.1 344.5 556.5 C348.9 563.9 358.2 578.6 363.0 587.8 C367.8 597.0 370.1 604.2 373.2 611.9 C376.3 619.6 377.9 623.8 381.5 634.0 C385.1 644.2 391.2 662.6 394.5 673.0 C397.8 683.4 399.5 689.3 401.0 696.3 C402.5 703.3 403.6 709.4 403.7 714.8 C403.8 720.2 402.3 725.4 401.5 728.7 C400.7 732.0 399.3 733.8 398.9 734.8 L406.0 757.0 L405.0 760.5 L402.5 762.0 L379.7 768.9 L367.8 747.4 L365.6 745.2 L361.1 751.0 L361.1 773.3 L359.7 776.3 L357.0 777.0 L332.3 779.3 L328.6 757.0 L325.6 754.0 C324.0 752.8 319.6 750.9 316.0 746.7 C312.4 742.5 307.1 734.9 304.1 728.9 C301.1 722.9 299.2 714.0 298.2 711.0 L296.7 731.5 C292.8 733.1 281.9 738.8 273.0 741.2 C264.1 743.7 251.6 745.2 243.0 746.2 C234.4 747.2 228.7 747.5 221.5 747.5 C214.3 747.5 208.6 747.2 200.0 746.2 C191.4 745.2 178.9 743.7 170.0 741.2 C161.1 738.8 150.2 733.1 146.3 731.5 L144.8 711.0 C143.8 714.0 141.9 722.9 138.9 728.9 C135.9 734.9 130.6 742.5 127.0 746.7 C123.4 750.9 119.0 752.8 117.4 754.0 L114.4 757.0 L110.7 779.3 L86.0 777.0 L83.3 776.3 L81.9 773.3 L81.9 751.0 L77.4 745.2 L75.2 747.4 L63.3 768.9 L40.5 762.0 L38.0 760.5 L37.0 757.0 L44.1 734.8 C43.7 733.8 42.3 732.0 41.5 728.7 C40.7 725.4 39.2 720.2 39.3 714.8 C39.4 709.4 40.5 703.3 42.0 696.3 C43.5 689.3 45.2 683.4 48.5 673.0 C51.8 662.6 58.0 644.2 61.5 634.0 C65.0 623.8 66.7 619.6 69.8 611.9 C72.9 604.2 75.2 597.0 80.0 587.8 C84.8 578.6 94.1 563.9 98.5 556.5 C102.9 549.1 104.0 547.3 106.4 543.4 C108.8 539.5 110.7 536.8 112.9 533.2 C115.1 529.7 117.1 525.8 119.4 522.1 C121.7 518.4 124.5 514.1 126.8 511.0 C129.1 507.9 131.0 506.1 133.3 503.6 C135.6 501.1 137.6 498.8 140.7 496.2 C143.8 493.6 148.0 490.5 151.8 487.9 C155.7 485.3 161.8 481.6 163.8 480.4 Z" fill="#e2e4e3"/><path d="M163.8 480.4 C161.8 481.6 155.7 485.3 151.8 487.9 C148.0 490.5 143.8 493.6 140.7 496.2 C137.6 498.8 135.6 501.1 133.3 503.6 C131.0 506.1 129.1 507.9 126.8 511.0 C124.5 514.1 121.7 518.4 119.4 522.1 C117.1 525.8 115.1 529.7 112.9 533.2 C110.7 536.8 108.8 539.5 106.4 543.4 C104.0 547.3 102.9 549.1 98.5 556.5 C94.1 563.9 84.8 578.6 80.0 587.8 C75.2 597.0 72.9 604.2 69.8 611.9 C66.7 619.6 65.0 623.8 61.5 634.0 C58.0 644.2 51.8 662.6 48.5 673.0 C45.2 683.4 43.5 689.3 42.0 696.3 C40.5 703.3 39.4 709.4 39.3 714.8 C39.2 720.2 40.7 725.4 41.5 728.7 C42.3 732.0 43.7 733.8 44.1 734.8 L75.2 747.4 L78.5 744.5 C78.1 743.5 76.7 742.7 75.9 738.5 C75.1 734.3 73.9 726.4 73.5 719.4 C73.1 712.4 73.0 704.0 73.5 696.3 C74.0 688.6 75.1 680.7 76.3 673.0 C77.5 665.3 79.5 656.5 80.9 650.0 C82.3 643.5 83.0 640.4 84.6 634.0 C86.1 627.6 88.2 619.6 90.2 611.9 C92.2 604.2 93.9 597.5 96.7 587.8 C99.5 578.1 104.6 561.6 107.3 553.6 C110.0 545.6 110.9 544.0 112.9 539.7 C114.9 535.4 117.1 531.6 119.4 527.7 C121.7 523.9 124.0 520.2 126.8 516.6 C129.6 513.0 132.6 509.6 136.0 506.4 C139.4 503.1 143.2 499.9 147.1 497.1 C151.0 494.3 157.2 490.9 159.2 489.7 Z" fill="#dddfde" /><path d="M163.8 480.4 C161.8 481.6 155.7 485.3 151.8 487.9 C148.0 490.5 143.8 493.6 140.7 496.2 C137.6 498.8 135.6 501.1 133.3 503.6 C131.0 506.1 129.1 507.9 126.8 511.0 C124.5 514.1 121.7 518.4 119.4 522.1 C117.1 525.8 115.1 529.7 112.9 533.2 C110.7 536.8 108.8 539.5 106.4 543.4 C104.0 547.3 102.9 549.1 98.5 556.5 C94.1 563.9 84.8 578.6 80.0 587.8 C75.2 597.0 72.9 604.2 69.8 611.9 C66.7 619.6 65.0 623.8 61.5 634.0 C58.0 644.2 51.8 662.6 48.5 673.0 C45.2 683.4 43.5 689.3 42.0 696.3 C40.5 703.3 39.4 709.4 39.3 714.8 C39.2 720.2 40.7 725.4 41.5 728.7 C42.3 732.0 43.7 733.8 44.1 734.8 L75.2 747.4 L78.5 744.5 C78.1 743.5 76.7 742.7 75.9 738.5 C75.1 734.3 73.9 726.4 73.5 719.4 C73.1 712.4 73.0 704.0 73.5 696.3 C74.0 688.6 75.1 680.7 76.3 673.0 C77.5 665.3 79.5 656.5 80.9 650.0 C82.3 643.5 83.0 640.4 84.6 634.0 C86.1 627.6 88.2 619.6 90.2 611.9 C92.2 604.2 93.9 597.5 96.7 587.8 C99.5 578.1 104.6 561.6 107.3 553.6 C110.0 545.6 110.9 544.0 112.9 539.7 C114.9 535.4 117.1 531.6 119.4 527.7 C121.7 523.9 124.0 520.2 126.8 516.6 C129.6 513.0 132.6 509.6 136.0 506.4 C139.4 503.1 143.2 499.9 147.1 497.1 C151.0 494.3 157.2 490.9 159.2 489.7 Z" fill="#dddfde"  transform="matrix(-1 0 0 1 443.0 0)"/><path d="M163.8 480.4 C166.1 479.3 174.0 475.7 177.7 474.0 C181.4 472.3 183.6 471.1 186.0 470.0 C188.4 468.9 191.2 468.1 192.3 467.7 L193.5 479.7 C192.4 479.5 190.4 478.0 187.0 478.6 C183.6 479.2 177.7 481.4 173.1 483.2 C168.5 485.0 161.5 488.6 159.2 489.7 Z" fill="#dddfde" /><path d="M163.8 480.4 C166.1 479.3 174.0 475.7 177.7 474.0 C181.4 472.3 183.6 471.1 186.0 470.0 C188.4 468.9 191.2 468.1 192.3 467.7 L193.5 479.7 C192.4 479.5 190.4 478.0 187.0 478.6 C183.6 479.2 177.7 481.4 173.1 483.2 C168.5 485.0 161.5 488.6 159.2 489.7 Z" fill="#dddfde"  transform="matrix(-1 0 0 1 443.0 0)"/><g clip-path="url(#cpw)"><g filter="url(#blw)"><path d="M112.9 539.7 C112.0 542.0 110.0 545.6 107.3 553.6 C104.6 561.6 99.5 578.1 96.7 587.8 C93.9 597.5 92.2 604.2 90.2 611.9 C88.2 619.6 86.1 627.6 84.6 634.0 C83.0 640.4 82.3 643.5 80.9 650.0 C79.5 656.5 77.5 665.3 76.3 673.0 C75.1 680.7 74.0 688.6 73.5 696.3 C73.0 704.0 73.1 712.4 73.5 719.4 C73.9 726.4 75.2 734.2 75.9 738.5 C76.6 742.8 77.2 743.9 77.4 745.0 L62.5 743.5 C62.7 738.2 63.0 722.6 63.5 712.0 C64.0 701.4 64.1 692.0 65.5 680.0 C66.9 668.0 68.9 652.5 72.0 640.0 C75.1 627.5 79.7 617.3 84.0 605.0 C88.3 592.7 94.0 575.8 98.0 566.0 C102.0 556.2 105.5 550.4 108.0 546.0 C110.5 541.6 112.1 540.8 112.9 539.7 Z" fill="#b9bbba" /><path d="M112.9 539.7 C112.0 542.0 110.0 545.6 107.3 553.6 C104.6 561.6 99.5 578.1 96.7 587.8 C93.9 597.5 92.2 604.2 90.2 611.9 C88.2 619.6 86.1 627.6 84.6 634.0 C83.0 640.4 82.3 643.5 80.9 650.0 C79.5 656.5 77.5 665.3 76.3 673.0 C75.1 680.7 74.0 688.6 73.5 696.3 C73.0 704.0 73.1 712.4 73.5 719.4 C73.9 726.4 75.2 734.2 75.9 738.5 C76.6 742.8 77.2 743.9 77.4 745.0 L62.5 743.5 C62.7 738.2 63.0 722.6 63.5 712.0 C64.0 701.4 64.1 692.0 65.5 680.0 C66.9 668.0 68.9 652.5 72.0 640.0 C75.1 627.5 79.7 617.3 84.0 605.0 C88.3 592.7 94.0 575.8 98.0 566.0 C102.0 556.2 105.5 550.4 108.0 546.0 C110.5 541.6 112.1 540.8 112.9 539.7 Z" fill="#b9bbba"  transform="matrix(-1 0 0 1 443.0 0)"/><path d="M132.1 552.0 C132.1 560.0 132.0 584.6 132.2 600.0 C132.3 615.4 132.4 630.8 133.0 644.4 C133.6 658.0 133.9 671.1 135.9 681.5 C137.9 691.9 143.3 702.5 144.8 706.7 C143.8 710.4 141.9 722.2 138.9 728.9 C135.9 735.6 129.0 743.7 127.0 746.7 C126.4 743.1 124.2 734.5 123.5 725.0 C122.8 715.5 122.4 704.2 122.5 690.0 C122.6 675.8 123.3 656.7 124.0 640.0 C124.7 623.3 125.5 604.0 126.5 590.0 C127.5 576.0 129.1 562.3 130.0 556.0 C130.9 549.7 131.8 552.7 132.1 552.0 Z" fill="url(#fsw)" /><path d="M132.1 552.0 C132.1 560.0 132.0 584.6 132.2 600.0 C132.3 615.4 132.4 630.8 133.0 644.4 C133.6 658.0 133.9 671.1 135.9 681.5 C137.9 691.9 143.3 702.5 144.8 706.7 C143.8 710.4 141.9 722.2 138.9 728.9 C135.9 735.6 129.0 743.7 127.0 746.7 C126.4 743.1 124.2 734.5 123.5 725.0 C122.8 715.5 122.4 704.2 122.5 690.0 C122.6 675.8 123.3 656.7 124.0 640.0 C124.7 623.3 125.5 604.0 126.5 590.0 C127.5 576.0 129.1 562.3 130.0 556.0 C130.9 549.7 131.8 552.7 132.1 552.0 Z" fill="url(#fsw)"  transform="matrix(-1 0 0 1 443.0 0)"/></g></g><path d="M44.1 734.8 L37.0 757.0 L38.0 760.5 L40.5 762.0 L63.3 768.9 L75.2 747.4 L77.4 745.2 C76.9 745.3 78.0 746.5 74.4 746.0 C70.8 745.5 61.0 744.1 55.9 742.2 C50.8 740.3 46.1 736.0 44.1 734.8 Z" fill="#cdcfce" /><path d="M44.1 734.8 L37.0 757.0 L38.0 760.5 L40.5 762.0 L63.3 768.9 L75.2 747.4 L77.4 745.2 C76.9 745.3 78.0 746.5 74.4 746.0 C70.8 745.5 61.0 744.1 55.9 742.2 C50.8 740.3 46.1 736.0 44.1 734.8 Z" fill="#cdcfce"  transform="matrix(-1 0 0 1 443.0 0)"/><path d="M81.9 751.0 L81.9 773.3 L83.3 776.3 L86.0 777.0 L110.7 779.3 L114.4 757.0 L117.4 754.0 C116.4 754.4 116.2 756.4 111.5 756.3 C106.8 756.2 94.2 754.5 89.3 753.3 C84.4 752.1 84.0 750.8 82.0 749.0 C80.0 747.2 78.2 743.6 77.4 742.5 Z" fill="#cdcfce" /><path d="M81.9 751.0 L81.9 773.3 L83.3 776.3 L86.0 777.0 L110.7 779.3 L114.4 757.0 L117.4 754.0 C116.4 754.4 116.2 756.4 111.5 756.3 C106.8 756.2 94.2 754.5 89.3 753.3 C84.4 752.1 84.0 750.8 82.0 749.0 C80.0 747.2 78.2 743.6 77.4 742.5 Z" fill="#cdcfce"  transform="matrix(-1 0 0 1 443.0 0)"/><path d="M81.9 751.0 L81.9 773.3 L83.3 776.3 L86.0 777.0 L110.7 779.3 L114.4 757.0 L117.4 754.0 C116.4 754.4 116.2 756.4 111.5 756.3 C106.8 756.2 94.2 754.5 89.3 753.3 C84.4 752.1 84.0 750.8 82.0 749.0 C80.0 747.2 78.2 743.6 77.4 742.5 Z" fill="url(#rbw)" /><path d="M81.9 751.0 L81.9 773.3 L83.3 776.3 L86.0 777.0 L110.7 779.3 L114.4 757.0 L117.4 754.0 C116.4 754.4 116.2 756.4 111.5 756.3 C106.8 756.2 94.2 754.5 89.3 753.3 C84.4 752.1 84.0 750.8 82.0 749.0 C80.0 747.2 78.2 743.6 77.4 742.5 Z" fill="url(#rbw)"  transform="matrix(-1 0 0 1 443.0 0)"/><path d="M44.1 734.8 L37.0 757.0 L38.0 760.5 L40.5 762.0 L63.3 768.9 L75.2 747.4 L77.4 745.2 C76.9 745.3 78.0 746.5 74.4 746.0 C70.8 745.5 61.0 744.1 55.9 742.2 C50.8 740.3 46.1 736.0 44.1 734.8 Z" fill="url(#rbw)" /><path d="M44.1 734.8 L37.0 757.0 L38.0 760.5 L40.5 762.0 L63.3 768.9 L75.2 747.4 L77.4 745.2 C76.9 745.3 78.0 746.5 74.4 746.0 C70.8 745.5 61.0 744.1 55.9 742.2 C50.8 740.3 46.1 736.0 44.1 734.8 Z" fill="url(#rbw)"  transform="matrix(-1 0 0 1 443.0 0)"/><path d="M146.8 707.5 C152.3 708.7 167.6 712.8 180.0 714.5 C192.4 716.2 207.7 718.0 221.5 718.0 C235.3 718.0 250.6 716.2 263.0 714.5 C275.4 712.8 290.7 708.7 296.2 707.5 L296.7 731.5 C292.8 733.1 281.9 738.8 273.0 741.2 C264.1 743.7 251.6 745.2 243.0 746.2 C234.4 747.2 228.7 747.5 221.5 747.5 C214.3 747.5 208.6 747.2 200.0 746.2 C191.4 745.2 178.9 743.7 170.0 741.2 C161.1 738.8 150.2 733.1 146.3 731.5 Z" fill="#d3d5d4"/><path d="M146.8 707.5 C152.3 708.7 167.6 712.8 180.0 714.5 C192.4 716.2 207.7 718.0 221.5 718.0 C235.3 718.0 250.6 716.2 263.0 714.5 C275.4 712.8 290.7 708.7 296.2 707.5 L296.7 731.5 C292.8 733.1 281.9 738.8 273.0 741.2 C264.1 743.7 251.6 745.2 243.0 746.2 C234.4 747.2 228.7 747.5 221.5 747.5 C214.3 747.5 208.6 747.2 200.0 746.2 C191.4 745.2 178.9 743.7 170.0 741.2 C161.1 738.8 150.2 733.1 146.3 731.5 Z" fill="url(#rbw)"/><path d="M148.7 727.8 C153.9 729.2 167.9 734.1 180.0 736.2 C192.1 738.3 207.7 740.2 221.5 740.2 C235.3 740.2 250.9 738.3 263.0 736.2 C275.1 734.1 289.1 729.2 294.3 727.8 L296.7 731.5 C292.8 733.1 281.9 738.8 273.0 741.2 C264.1 743.7 251.6 745.2 243.0 746.2 C234.4 747.2 228.7 747.5 221.5 747.5 C214.3 747.5 208.6 747.2 200.0 746.2 C191.4 745.2 178.9 743.7 170.0 741.2 C161.1 738.8 150.2 733.1 146.3 731.5 Z" fill="#b7b9b8"/><path d="M193.5 468.0 C194.8 468.2 197.9 468.5 201.0 469.2 C204.1 469.9 208.6 471.4 212.0 472.0 C215.4 472.6 218.3 473.0 221.5 473.0 C224.7 473.0 227.6 472.6 231.0 472.0 C234.4 471.4 238.9 469.9 242.0 469.2 C245.1 468.5 248.2 468.2 249.5 468.0 L249.5 479.7 C247.2 480.6 240.7 483.6 236.0 485.0 C231.3 486.4 226.3 487.9 221.5 487.9 C216.7 487.9 211.7 486.4 207.0 485.0 C202.3 483.6 195.8 480.6 193.5 479.7 Z" fill="#d6d8d7"/><path d="M190.9 480.5 C190.9 481.8 190.9 485.4 191.2 488.0 C191.5 490.6 191.7 493.6 192.5 496.0 C193.3 498.4 194.5 500.4 196.0 502.5 C197.5 504.6 199.3 506.7 201.6 508.4 C203.9 510.1 207.6 511.8 210.0 512.8 C212.4 513.8 214.1 513.9 216.0 514.2 C217.9 514.5 219.7 514.7 221.5 514.7 C223.3 514.7 225.1 514.5 227.0 514.2 C228.9 513.9 230.6 513.8 233.0 512.8 C235.4 511.8 239.1 510.1 241.4 508.4 C243.7 506.7 245.5 504.6 247.0 502.5 C248.5 500.4 249.7 498.4 250.5 496.0 C251.3 493.6 251.5 490.6 251.8 488.0 C252.1 485.4 252.1 481.8 252.1 480.5 L249.5 479.7 C247.2 480.6 240.7 483.6 236.0 485.0 C231.3 486.4 226.3 487.9 221.5 487.9 C216.7 487.9 211.7 486.4 207.0 485.0 C202.3 483.6 195.8 480.6 193.5 479.7 Z" fill="url(#nkw)"/><defs><clipPath id="rcw"><path d="M181.6 481.0 C181.7 482.5 181.7 487.2 182.0 490.0 C182.3 492.8 182.6 495.5 183.4 498.0 C184.2 500.5 185.5 502.7 187.0 505.0 C188.5 507.3 190.3 509.5 192.5 511.6 C194.7 513.7 197.1 515.9 200.0 517.7 C202.9 519.5 207.3 521.3 210.0 522.3 C212.7 523.3 214.1 523.2 216.0 523.5 C217.9 523.8 219.7 524.0 221.5 524.0 C223.3 524.0 225.1 523.8 227.0 523.5 C228.9 523.2 230.3 523.3 233.0 522.3 C235.7 521.3 240.1 519.5 243.0 517.7 C245.9 515.9 248.3 513.7 250.5 511.6 C252.7 509.5 254.5 507.3 256.0 505.0 C257.5 502.7 258.8 500.5 259.6 498.0 C260.4 495.5 260.7 492.8 261.0 490.0 C261.3 487.2 261.3 482.5 261.4 481.0 L252.1 480.5 C252.1 481.8 252.1 485.4 251.8 488.0 C251.5 490.6 251.3 493.6 250.5 496.0 C249.7 498.4 248.5 500.4 247.0 502.5 C245.5 504.6 243.7 506.7 241.4 508.4 C239.1 510.1 235.4 511.8 233.0 512.8 C230.6 513.8 228.9 513.9 227.0 514.2 C225.1 514.5 223.3 514.7 221.5 514.7 C219.7 514.7 217.9 514.5 216.0 514.2 C214.1 513.9 212.4 513.8 210.0 512.8 C207.6 511.8 203.9 510.1 201.6 508.4 C199.3 506.7 197.5 504.6 196.0 502.5 C194.5 500.4 193.3 498.4 192.5 496.0 C191.7 493.6 191.5 490.6 191.2 488.0 C190.9 485.4 190.9 481.8 190.9 480.5 Z"/></clipPath></defs><path d="M181.6 481.0 C181.7 482.5 181.7 487.2 182.0 490.0 C182.3 492.8 182.6 495.5 183.4 498.0 C184.2 500.5 185.5 502.7 187.0 505.0 C188.5 507.3 190.3 509.5 192.5 511.6 C194.7 513.7 197.1 515.9 200.0 517.7 C202.9 519.5 207.3 521.3 210.0 522.3 C212.7 523.3 214.1 523.2 216.0 523.5 C217.9 523.8 219.7 524.0 221.5 524.0 C223.3 524.0 225.1 523.8 227.0 523.5 C228.9 523.2 230.3 523.3 233.0 522.3 C235.7 521.3 240.1 519.5 243.0 517.7 C245.9 515.9 248.3 513.7 250.5 511.6 C252.7 509.5 254.5 507.3 256.0 505.0 C257.5 502.7 258.8 500.5 259.6 498.0 C260.4 495.5 260.7 492.8 261.0 490.0 C261.3 487.2 261.3 482.5 261.4 481.0 L252.1 480.5 C252.1 481.8 252.1 485.4 251.8 488.0 C251.5 490.6 251.3 493.6 250.5 496.0 C249.7 498.4 248.5 500.4 247.0 502.5 C245.5 504.6 243.7 506.7 241.4 508.4 C239.1 510.1 235.4 511.8 233.0 512.8 C230.6 513.8 228.9 513.9 227.0 514.2 C225.1 514.5 223.3 514.7 221.5 514.7 C219.7 514.7 217.9 514.5 216.0 514.2 C214.1 513.9 212.4 513.8 210.0 512.8 C207.6 511.8 203.9 510.1 201.6 508.4 C199.3 506.7 197.5 504.6 196.0 502.5 C194.5 500.4 193.3 498.4 192.5 496.0 C191.7 493.6 191.5 490.6 191.2 488.0 C190.9 485.4 190.9 481.8 190.9 480.5 Z" fill="#d0d2d1"/><g clip-path="url(#rcw)" filter="url(#blw)"><path d="M181.6 481.0 C181.7 482.5 181.7 487.2 182.0 490.0 C182.3 492.8 182.6 495.5 183.4 498.0 C184.2 500.5 185.5 502.7 187.0 505.0 C188.5 507.3 190.3 509.5 192.5 511.6 C194.7 513.7 197.1 515.9 200.0 517.7 C202.9 519.5 207.3 521.3 210.0 522.3 C212.7 523.3 214.1 523.2 216.0 523.5 C217.9 523.8 219.7 524.0 221.5 524.0 C223.3 524.0 225.1 523.8 227.0 523.5 C228.9 523.2 230.3 523.3 233.0 522.3 C235.7 521.3 240.1 519.5 243.0 517.7 C245.9 515.9 248.3 513.7 250.5 511.6 C252.7 509.5 254.5 507.3 256.0 505.0 C257.5 502.7 258.8 500.5 259.6 498.0 C260.4 495.5 260.7 492.8 261.0 490.0 C261.3 487.2 261.3 482.5 261.4 481.0" fill="none" stroke="#8e9090" stroke-width="3.2" opacity="0.8"/><path d="M190.9 480.5 C190.9 481.8 190.9 485.4 191.2 488.0 C191.5 490.6 191.7 493.6 192.5 496.0 C193.3 498.4 194.5 500.4 196.0 502.5 C197.5 504.6 199.3 506.7 201.6 508.4 C203.9 510.1 207.6 511.8 210.0 512.8 C212.4 513.8 214.1 513.9 216.0 514.2 C217.9 514.5 219.7 514.7 221.5 514.7 C223.3 514.7 225.1 514.5 227.0 514.2 C228.9 513.9 230.6 513.8 233.0 512.8 C235.4 511.8 239.1 510.1 241.4 508.4 C243.7 506.7 245.5 504.6 247.0 502.5 C248.5 500.4 249.7 498.4 250.5 496.0 C251.3 493.6 251.5 490.6 251.8 488.0 C252.1 485.4 252.1 481.8 252.1 480.5" fill="none" stroke="#8e9090" stroke-width="3.5" opacity="0.6"/></g><path d="M181.6 481.0 C181.7 482.5 181.7 487.2 182.0 490.0 C182.3 492.8 182.6 495.5 183.4 498.0 C184.2 500.5 185.5 502.7 187.0 505.0 C188.5 507.3 190.3 509.5 192.5 511.6 C194.7 513.7 197.1 515.9 200.0 517.7 C202.9 519.5 207.3 521.3 210.0 522.3 C212.7 523.3 214.1 523.2 216.0 523.5 C217.9 523.8 219.7 524.0 221.5 524.0 C223.3 524.0 225.1 523.8 227.0 523.5 C228.9 523.2 230.3 523.3 233.0 522.3 C235.7 521.3 240.1 519.5 243.0 517.7 C245.9 515.9 248.3 513.7 250.5 511.6 C252.7 509.5 254.5 507.3 256.0 505.0 C257.5 502.7 258.8 500.5 259.6 498.0 C260.4 495.5 260.7 492.8 261.0 490.0 C261.3 487.2 261.3 482.5 261.4 481.0" fill="none" stroke="#8e9090" stroke-width="1" opacity="0.8"/><g fill="none" stroke="#3a3a3a" stroke-width="1.45" stroke-linecap="round"><path d="M78.5 744.5 C78.1 743.5 76.7 742.7 75.9 738.5 C75.1 734.3 73.9 726.4 73.5 719.4 C73.1 712.4 73.0 704.0 73.5 696.3 C74.0 688.6 75.1 680.7 76.3 673.0 C77.5 665.3 79.5 656.5 80.9 650.0 C82.3 643.5 83.0 640.4 84.6 634.0 C86.1 627.6 88.2 619.6 90.2 611.9 C92.2 604.2 93.9 597.5 96.7 587.8 C99.5 578.1 104.6 561.6 107.3 553.6 C110.0 545.6 110.9 544.0 112.9 539.7 C114.9 535.4 117.1 531.6 119.4 527.7 C121.7 523.9 124.0 520.2 126.8 516.6 C129.6 513.0 132.6 509.6 136.0 506.4 C139.4 503.1 143.2 499.9 147.1 497.1 C151.0 494.3 154.9 492.0 159.2 489.7 C163.5 487.4 168.5 485.0 173.1 483.2 C177.7 481.4 183.6 479.2 187.0 478.6 C190.4 478.0 192.4 479.5 193.5 479.7 C195.8 480.6 202.3 483.6 207.0 485.0 C211.7 486.4 216.7 487.9 221.5 487.9 C226.3 487.9 231.3 486.4 236.0 485.0 C240.7 483.6 247.2 480.6 249.5 479.7 C250.6 479.5 252.6 478.0 256.0 478.6 C259.4 479.2 265.3 481.4 269.9 483.2 C274.5 485.0 279.5 487.4 283.8 489.7 C288.1 492.0 292.0 494.3 295.9 497.1 C299.8 499.9 303.6 503.1 307.0 506.4 C310.4 509.6 313.4 513.0 316.2 516.6 C319.0 520.2 321.3 523.9 323.6 527.7 C325.9 531.6 328.1 535.4 330.1 539.7 C332.1 544.0 333.0 545.6 335.7 553.6 C338.4 561.6 343.4 578.1 346.3 587.8 C349.2 597.5 350.8 604.2 352.8 611.9 C354.8 619.6 356.8 627.6 358.4 634.0 C359.9 640.4 360.7 643.5 362.1 650.0 C363.5 656.5 365.5 665.3 366.7 673.0 C367.9 680.7 369.0 688.6 369.5 696.3 C370.0 704.0 369.9 712.4 369.5 719.4 C369.1 726.4 367.9 734.3 367.1 738.5 C366.3 742.7 364.9 743.5 364.5 744.5"/><path d="M131.8 540.0 C131.9 550.0 132.0 582.6 132.2 600.0 C132.4 617.4 132.4 630.8 133.0 644.4 C133.6 658.0 133.9 671.1 135.9 681.5 C137.9 691.9 143.3 702.5 144.8 706.7 M311.2 540.0 C311.1 550.0 311.0 582.6 310.8 600.0 C310.6 617.4 310.6 630.8 310.0 644.4 C309.4 658.0 309.1 671.1 307.1 681.5 C305.1 691.9 299.7 702.5 298.2 706.7"/><path d="M112.5 543.5 C114.2 544.0 120.0 545.2 123.0 546.5 C126.0 547.8 129.0 549.6 130.5 551.0 C132.0 552.4 131.8 554.3 132.0 555.0 M330.5 543.5 C328.8 544.0 323.0 545.2 320.0 546.5 C317.0 547.8 314.0 549.6 312.5 551.0 C311.0 552.4 311.2 554.3 311.0 555.0"/><path d="M146.8 707.5 C152.3 708.7 167.6 712.8 180.0 714.5 C192.4 716.2 207.7 718.0 221.5 718.0 C235.3 718.0 250.6 716.2 263.0 714.5 C275.4 712.8 290.7 708.7 296.2 707.5"/><path d="M148.7 727.8 C153.9 729.2 167.9 734.1 180.0 736.2 C192.1 738.3 207.7 740.2 221.5 740.2 C235.3 740.2 250.9 738.3 263.0 736.2 C275.1 734.1 289.1 729.2 294.3 727.8"/><path d="M193.9 470.5 V480 M249.1 470.5 V480"/><path d="M77.4 742.5 C78.2 743.6 80.0 747.2 82.0 749.0 C84.0 750.8 84.4 752.1 89.3 753.3 C94.2 754.5 106.8 756.2 111.5 756.3 C116.2 756.4 116.4 754.4 117.4 754.0 M365.6 742.5 C364.8 743.6 363.0 747.2 361.0 749.0 C359.0 750.8 358.6 752.1 353.7 753.3 C348.8 754.5 336.2 756.2 331.5 756.3 C326.8 756.4 326.6 754.4 325.6 754.0"/><path d="M44.1 734.8 C46.1 736.0 50.8 740.3 55.9 742.2 C61.0 744.1 71.3 745.4 74.4 746.0 M398.9 734.8 C396.9 736.0 392.2 740.3 387.1 742.2 C382.1 744.1 371.7 745.4 368.6 746.0"/><path d="M192.0 488.5 C194.2 489.5 200.1 493.2 205.0 494.5 C209.9 495.8 216.0 496.5 221.5 496.5 C227.0 496.5 233.1 495.8 238.0 494.5 C242.9 493.2 248.8 489.5 251.0 488.5" stroke-width="1.16" opacity="0.6"/><path d="M192.3 491.5 C194.6 492.5 201.1 496.2 206.0 497.5 C210.9 498.8 216.3 499.3 221.5 499.3 C226.7 499.3 232.1 498.8 237.0 497.5 C241.9 496.2 248.4 492.5 250.7 491.5" stroke-width="1.16" opacity="0.6"/></g><path d="M190.9 480.5 C190.9 481.8 190.9 485.4 191.2 488.0 C191.5 490.6 191.7 493.6 192.5 496.0 C193.3 498.4 194.5 500.4 196.0 502.5 C197.5 504.6 199.3 506.7 201.6 508.4 C203.9 510.1 207.6 511.8 210.0 512.8 C212.4 513.8 214.1 513.9 216.0 514.2 C217.9 514.5 219.7 514.7 221.5 514.7 C223.3 514.7 225.1 514.5 227.0 514.2 C228.9 513.9 230.6 513.8 233.0 512.8 C235.4 511.8 239.1 510.1 241.4 508.4 C243.7 506.7 245.5 504.6 247.0 502.5 C248.5 500.4 249.7 498.4 250.5 496.0 C251.3 493.6 251.5 490.6 251.8 488.0 C252.1 485.4 252.1 481.8 252.1 480.5" fill="none" stroke="#262626" stroke-width="1.885"/><path d="M163.8 480.4 C166.1 479.3 174.0 475.7 177.7 474.0 C181.4 472.3 183.6 471.1 186.0 470.0 C188.4 468.9 190.0 467.9 192.3 467.7 C194.6 467.5 196.7 468.0 200.0 468.6 C203.3 469.2 208.4 470.9 212.0 471.6 C215.6 472.3 218.3 472.6 221.5 472.6 C224.7 472.6 227.4 472.3 231.0 471.6 C234.6 470.9 239.7 469.2 243.0 468.6 C246.3 468.0 248.4 467.5 250.7 467.7 C253.0 467.9 254.6 468.9 257.0 470.0 C259.4 471.1 261.6 472.3 265.3 474.0 C269.0 475.7 276.9 479.3 279.2 480.4 C281.2 481.6 287.3 485.3 291.2 487.9 C295.1 490.5 299.2 493.6 302.3 496.2 C305.4 498.8 307.4 501.1 309.7 503.6 C312.0 506.1 313.9 507.9 316.2 511.0 C318.5 514.1 321.3 518.4 323.6 522.1 C325.9 525.8 327.9 529.7 330.1 533.2 C332.3 536.8 334.2 539.5 336.6 543.4 C339.0 547.3 340.1 549.1 344.5 556.5 C348.9 563.9 358.2 578.6 363.0 587.8 C367.8 597.0 370.1 604.2 373.2 611.9 C376.3 619.6 377.9 623.8 381.5 634.0 C385.1 644.2 391.2 662.6 394.5 673.0 C397.8 683.4 399.5 689.3 401.0 696.3 C402.5 703.3 403.6 709.4 403.7 714.8 C403.8 720.2 402.3 725.4 401.5 728.7 C400.7 732.0 399.3 733.8 398.9 734.8 L406.0 757.0 L405.0 760.5 L402.5 762.0 L379.7 768.9 L367.8 747.4 L365.6 745.2 L361.1 751.0 L361.1 773.3 L359.7 776.3 L357.0 777.0 L332.3 779.3 L328.6 757.0 L325.6 754.0 C324.0 752.8 319.6 750.9 316.0 746.7 C312.4 742.5 307.1 734.9 304.1 728.9 C301.1 722.9 299.2 714.0 298.2 711.0 L296.7 731.5 C292.8 733.1 281.9 738.8 273.0 741.2 C264.1 743.7 251.6 745.2 243.0 746.2 C234.4 747.2 228.7 747.5 221.5 747.5 C214.3 747.5 208.6 747.2 200.0 746.2 C191.4 745.2 178.9 743.7 170.0 741.2 C161.1 738.8 150.2 733.1 146.3 731.5 L144.8 711.0 C143.8 714.0 141.9 722.9 138.9 728.9 C135.9 734.9 130.6 742.5 127.0 746.7 C123.4 750.9 119.0 752.8 117.4 754.0 L114.4 757.0 L110.7 779.3 L86.0 777.0 L83.3 776.3 L81.9 773.3 L81.9 751.0 L77.4 745.2 L75.2 747.4 L63.3 768.9 L40.5 762.0 L38.0 760.5 L37.0 757.0 L44.1 734.8 C43.7 733.8 42.3 732.0 41.5 728.7 C40.7 725.4 39.2 720.2 39.3 714.8 C39.4 709.4 40.5 703.3 42.0 696.3 C43.5 689.3 45.2 683.4 48.5 673.0 C51.8 662.6 58.0 644.2 61.5 634.0 C65.0 623.8 66.7 619.6 69.8 611.9 C72.9 604.2 75.2 597.0 80.0 587.8 C84.8 578.6 94.1 563.9 98.5 556.5 C102.9 549.1 104.0 547.3 106.4 543.4 C108.8 539.5 110.7 536.8 112.9 533.2 C115.1 529.7 117.1 525.8 119.4 522.1 C121.7 518.4 124.5 514.1 126.8 511.0 C129.1 507.9 131.0 506.1 133.3 503.6 C135.6 501.1 137.6 498.8 140.7 496.2 C143.8 493.6 148.0 490.5 151.8 487.9 C155.7 485.3 161.8 481.6 163.8 480.4 Z" fill="none" stroke="#262626" stroke-width="2.9" stroke-linejoin="round"/></g><g transform="translate(789.50 0.50)"><defs><linearGradient id="fsg" gradientUnits="userSpaceOnUse" x1="121" x2="135" y1="0" y2="0"><stop offset="0" stop-color="#868987" stop-opacity="0"/><stop offset="0.6" stop-color="#868987"/><stop offset="1" stop-color="#868987"/></linearGradient><linearGradient id="nkg" gradientUnits="userSpaceOnUse" x1="0" x2="0" y1="486" y2="515"><stop offset="0" stop-color="#929593"/><stop offset="0.35" stop-color="#929593"/><stop offset="1" stop-color="#4e504f"/></linearGradient><pattern id="rbg" patternUnits="userSpaceOnUse" width="2" height="10"><rect x="0" y="0" width="0.7" height="10" fill="#333333" opacity="0.10"/></pattern><filter id="blg" x="-20%" y="-20%" width="140%" height="140%"><feGaussianBlur stdDeviation="1.1"/></filter></defs><defs><clipPath id="cpg"><path d="M163.8 480.4 C166.1 479.3 174.0 475.7 177.7 474.0 C181.4 472.3 183.6 471.1 186.0 470.0 C188.4 468.9 190.0 467.9 192.3 467.7 C194.6 467.5 196.7 468.0 200.0 468.6 C203.3 469.2 208.4 470.9 212.0 471.6 C215.6 472.3 218.3 472.6 221.5 472.6 C224.7 472.6 227.4 472.3 231.0 471.6 C234.6 470.9 239.7 469.2 243.0 468.6 C246.3 468.0 248.4 467.5 250.7 467.7 C253.0 467.9 254.6 468.9 257.0 470.0 C259.4 471.1 261.6 472.3 265.3 474.0 C269.0 475.7 276.9 479.3 279.2 480.4 C281.2 481.6 287.3 485.3 291.2 487.9 C295.1 490.5 299.2 493.6 302.3 496.2 C305.4 498.8 307.4 501.1 309.7 503.6 C312.0 506.1 313.9 507.9 316.2 511.0 C318.5 514.1 321.3 518.4 323.6 522.1 C325.9 525.8 327.9 529.7 330.1 533.2 C332.3 536.8 334.2 539.5 336.6 543.4 C339.0 547.3 340.1 549.1 344.5 556.5 C348.9 563.9 358.2 578.6 363.0 587.8 C367.8 597.0 370.1 604.2 373.2 611.9 C376.3 619.6 377.9 623.8 381.5 634.0 C385.1 644.2 391.2 662.6 394.5 673.0 C397.8 683.4 399.5 689.3 401.0 696.3 C402.5 703.3 403.6 709.4 403.7 714.8 C403.8 720.2 402.3 725.4 401.5 728.7 C400.7 732.0 399.3 733.8 398.9 734.8 L406.0 757.0 L405.0 760.5 L402.5 762.0 L379.7 768.9 L367.8 747.4 L365.6 745.2 L361.1 751.0 L361.1 773.3 L359.7 776.3 L357.0 777.0 L332.3 779.3 L328.6 757.0 L325.6 754.0 C324.0 752.8 319.6 750.9 316.0 746.7 C312.4 742.5 307.1 734.9 304.1 728.9 C301.1 722.9 299.2 714.0 298.2 711.0 L296.7 731.5 C292.8 733.1 281.9 738.8 273.0 741.2 C264.1 743.7 251.6 745.2 243.0 746.2 C234.4 747.2 228.7 747.5 221.5 747.5 C214.3 747.5 208.6 747.2 200.0 746.2 C191.4 745.2 178.9 743.7 170.0 741.2 C161.1 738.8 150.2 733.1 146.3 731.5 L144.8 711.0 C143.8 714.0 141.9 722.9 138.9 728.9 C135.9 734.9 130.6 742.5 127.0 746.7 C123.4 750.9 119.0 752.8 117.4 754.0 L114.4 757.0 L110.7 779.3 L86.0 777.0 L83.3 776.3 L81.9 773.3 L81.9 751.0 L77.4 745.2 L75.2 747.4 L63.3 768.9 L40.5 762.0 L38.0 760.5 L37.0 757.0 L44.1 734.8 C43.7 733.8 42.3 732.0 41.5 728.7 C40.7 725.4 39.2 720.2 39.3 714.8 C39.4 709.4 40.5 703.3 42.0 696.3 C43.5 689.3 45.2 683.4 48.5 673.0 C51.8 662.6 58.0 644.2 61.5 634.0 C65.0 623.8 66.7 619.6 69.8 611.9 C72.9 604.2 75.2 597.0 80.0 587.8 C84.8 578.6 94.1 563.9 98.5 556.5 C102.9 549.1 104.0 547.3 106.4 543.4 C108.8 539.5 110.7 536.8 112.9 533.2 C115.1 529.7 117.1 525.8 119.4 522.1 C121.7 518.4 124.5 514.1 126.8 511.0 C129.1 507.9 131.0 506.1 133.3 503.6 C135.6 501.1 137.6 498.8 140.7 496.2 C143.8 493.6 148.0 490.5 151.8 487.9 C155.7 485.3 161.8 481.6 163.8 480.4 Z"/></clipPath></defs><path d="M163.8 480.4 C166.1 479.3 174.0 475.7 177.7 474.0 C181.4 472.3 183.6 471.1 186.0 470.0 C188.4 468.9 190.0 467.9 192.3 467.7 C194.6 467.5 196.7 468.0 200.0 468.6 C203.3 469.2 208.4 470.9 212.0 471.6 C215.6 472.3 218.3 472.6 221.5 472.6 C224.7 472.6 227.4 472.3 231.0 471.6 C234.6 470.9 239.7 469.2 243.0 468.6 C246.3 468.0 248.4 467.5 250.7 467.7 C253.0 467.9 254.6 468.9 257.0 470.0 C259.4 471.1 261.6 472.3 265.3 474.0 C269.0 475.7 276.9 479.3 279.2 480.4 C281.2 481.6 287.3 485.3 291.2 487.9 C295.1 490.5 299.2 493.6 302.3 496.2 C305.4 498.8 307.4 501.1 309.7 503.6 C312.0 506.1 313.9 507.9 316.2 511.0 C318.5 514.1 321.3 518.4 323.6 522.1 C325.9 525.8 327.9 529.7 330.1 533.2 C332.3 536.8 334.2 539.5 336.6 543.4 C339.0 547.3 340.1 549.1 344.5 556.5 C348.9 563.9 358.2 578.6 363.0 587.8 C367.8 597.0 370.1 604.2 373.2 611.9 C376.3 619.6 377.9 623.8 381.5 634.0 C385.1 644.2 391.2 662.6 394.5 673.0 C397.8 683.4 399.5 689.3 401.0 696.3 C402.5 703.3 403.6 709.4 403.7 714.8 C403.8 720.2 402.3 725.4 401.5 728.7 C400.7 732.0 399.3 733.8 398.9 734.8 L406.0 757.0 L405.0 760.5 L402.5 762.0 L379.7 768.9 L367.8 747.4 L365.6 745.2 L361.1 751.0 L361.1 773.3 L359.7 776.3 L357.0 777.0 L332.3 779.3 L328.6 757.0 L325.6 754.0 C324.0 752.8 319.6 750.9 316.0 746.7 C312.4 742.5 307.1 734.9 304.1 728.9 C301.1 722.9 299.2 714.0 298.2 711.0 L296.7 731.5 C292.8 733.1 281.9 738.8 273.0 741.2 C264.1 743.7 251.6 745.2 243.0 746.2 C234.4 747.2 228.7 747.5 221.5 747.5 C214.3 747.5 208.6 747.2 200.0 746.2 C191.4 745.2 178.9 743.7 170.0 741.2 C161.1 738.8 150.2 733.1 146.3 731.5 L144.8 711.0 C143.8 714.0 141.9 722.9 138.9 728.9 C135.9 734.9 130.6 742.5 127.0 746.7 C123.4 750.9 119.0 752.8 117.4 754.0 L114.4 757.0 L110.7 779.3 L86.0 777.0 L83.3 776.3 L81.9 773.3 L81.9 751.0 L77.4 745.2 L75.2 747.4 L63.3 768.9 L40.5 762.0 L38.0 760.5 L37.0 757.0 L44.1 734.8 C43.7 733.8 42.3 732.0 41.5 728.7 C40.7 725.4 39.2 720.2 39.3 714.8 C39.4 709.4 40.5 703.3 42.0 696.3 C43.5 689.3 45.2 683.4 48.5 673.0 C51.8 662.6 58.0 644.2 61.5 634.0 C65.0 623.8 66.7 619.6 69.8 611.9 C72.9 604.2 75.2 597.0 80.0 587.8 C84.8 578.6 94.1 563.9 98.5 556.5 C102.9 549.1 104.0 547.3 106.4 543.4 C108.8 539.5 110.7 536.8 112.9 533.2 C115.1 529.7 117.1 525.8 119.4 522.1 C121.7 518.4 124.5 514.1 126.8 511.0 C129.1 507.9 131.0 506.1 133.3 503.6 C135.6 501.1 137.6 498.8 140.7 496.2 C143.8 493.6 148.0 490.5 151.8 487.9 C155.7 485.3 161.8 481.6 163.8 480.4 Z" fill="#9ea19f"/><path d="M163.8 480.4 C161.8 481.6 155.7 485.3 151.8 487.9 C148.0 490.5 143.8 493.6 140.7 496.2 C137.6 498.8 135.6 501.1 133.3 503.6 C131.0 506.1 129.1 507.9 126.8 511.0 C124.5 514.1 121.7 518.4 119.4 522.1 C117.1 525.8 115.1 529.7 112.9 533.2 C110.7 536.8 108.8 539.5 106.4 543.4 C104.0 547.3 102.9 549.1 98.5 556.5 C94.1 563.9 84.8 578.6 80.0 587.8 C75.2 597.0 72.9 604.2 69.8 611.9 C66.7 619.6 65.0 623.8 61.5 634.0 C58.0 644.2 51.8 662.6 48.5 673.0 C45.2 683.4 43.5 689.3 42.0 696.3 C40.5 703.3 39.4 709.4 39.3 714.8 C39.2 720.2 40.7 725.4 41.5 728.7 C42.3 732.0 43.7 733.8 44.1 734.8 L75.2 747.4 L78.5 744.5 C78.1 743.5 76.7 742.7 75.9 738.5 C75.1 734.3 73.9 726.4 73.5 719.4 C73.1 712.4 73.0 704.0 73.5 696.3 C74.0 688.6 75.1 680.7 76.3 673.0 C77.5 665.3 79.5 656.5 80.9 650.0 C82.3 643.5 83.0 640.4 84.6 634.0 C86.1 627.6 88.2 619.6 90.2 611.9 C92.2 604.2 93.9 597.5 96.7 587.8 C99.5 578.1 104.6 561.6 107.3 553.6 C110.0 545.6 110.9 544.0 112.9 539.7 C114.9 535.4 117.1 531.6 119.4 527.7 C121.7 523.9 124.0 520.2 126.8 516.6 C129.6 513.0 132.6 509.6 136.0 506.4 C139.4 503.1 143.2 499.9 147.1 497.1 C151.0 494.3 157.2 490.9 159.2 489.7 Z" fill="#979a98" /><path d="M163.8 480.4 C161.8 481.6 155.7 485.3 151.8 487.9 C148.0 490.5 143.8 493.6 140.7 496.2 C137.6 498.8 135.6 501.1 133.3 503.6 C131.0 506.1 129.1 507.9 126.8 511.0 C124.5 514.1 121.7 518.4 119.4 522.1 C117.1 525.8 115.1 529.7 112.9 533.2 C110.7 536.8 108.8 539.5 106.4 543.4 C104.0 547.3 102.9 549.1 98.5 556.5 C94.1 563.9 84.8 578.6 80.0 587.8 C75.2 597.0 72.9 604.2 69.8 611.9 C66.7 619.6 65.0 623.8 61.5 634.0 C58.0 644.2 51.8 662.6 48.5 673.0 C45.2 683.4 43.5 689.3 42.0 696.3 C40.5 703.3 39.4 709.4 39.3 714.8 C39.2 720.2 40.7 725.4 41.5 728.7 C42.3 732.0 43.7 733.8 44.1 734.8 L75.2 747.4 L78.5 744.5 C78.1 743.5 76.7 742.7 75.9 738.5 C75.1 734.3 73.9 726.4 73.5 719.4 C73.1 712.4 73.0 704.0 73.5 696.3 C74.0 688.6 75.1 680.7 76.3 673.0 C77.5 665.3 79.5 656.5 80.9 650.0 C82.3 643.5 83.0 640.4 84.6 634.0 C86.1 627.6 88.2 619.6 90.2 611.9 C92.2 604.2 93.9 597.5 96.7 587.8 C99.5 578.1 104.6 561.6 107.3 553.6 C110.0 545.6 110.9 544.0 112.9 539.7 C114.9 535.4 117.1 531.6 119.4 527.7 C121.7 523.9 124.0 520.2 126.8 516.6 C129.6 513.0 132.6 509.6 136.0 506.4 C139.4 503.1 143.2 499.9 147.1 497.1 C151.0 494.3 157.2 490.9 159.2 489.7 Z" fill="#979a98"  transform="matrix(-1 0 0 1 443.0 0)"/><path d="M163.8 480.4 C166.1 479.3 174.0 475.7 177.7 474.0 C181.4 472.3 183.6 471.1 186.0 470.0 C188.4 468.9 191.2 468.1 192.3 467.7 L193.5 479.7 C192.4 479.5 190.4 478.0 187.0 478.6 C183.6 479.2 177.7 481.4 173.1 483.2 C168.5 485.0 161.5 488.6 159.2 489.7 Z" fill="#979a98" /><path d="M163.8 480.4 C166.1 479.3 174.0 475.7 177.7 474.0 C181.4 472.3 183.6 471.1 186.0 470.0 C188.4 468.9 191.2 468.1 192.3 467.7 L193.5 479.7 C192.4 479.5 190.4 478.0 187.0 478.6 C183.6 479.2 177.7 481.4 173.1 483.2 C168.5 485.0 161.5 488.6 159.2 489.7 Z" fill="#979a98"  transform="matrix(-1 0 0 1 443.0 0)"/><g clip-path="url(#cpg)"><g filter="url(#blg)"><path d="M112.9 539.7 C112.0 542.0 110.0 545.6 107.3 553.6 C104.6 561.6 99.5 578.1 96.7 587.8 C93.9 597.5 92.2 604.2 90.2 611.9 C88.2 619.6 86.1 627.6 84.6 634.0 C83.0 640.4 82.3 643.5 80.9 650.0 C79.5 656.5 77.5 665.3 76.3 673.0 C75.1 680.7 74.0 688.6 73.5 696.3 C73.0 704.0 73.1 712.4 73.5 719.4 C73.9 726.4 75.2 734.2 75.9 738.5 C76.6 742.8 77.2 743.9 77.4 745.0 L62.5 743.5 C62.7 738.2 63.0 722.6 63.5 712.0 C64.0 701.4 64.1 692.0 65.5 680.0 C66.9 668.0 68.9 652.5 72.0 640.0 C75.1 627.5 79.7 617.3 84.0 605.0 C88.3 592.7 94.0 575.8 98.0 566.0 C102.0 556.2 105.5 550.4 108.0 546.0 C110.5 541.6 112.1 540.8 112.9 539.7 Z" fill="#868987" /><path d="M112.9 539.7 C112.0 542.0 110.0 545.6 107.3 553.6 C104.6 561.6 99.5 578.1 96.7 587.8 C93.9 597.5 92.2 604.2 90.2 611.9 C88.2 619.6 86.1 627.6 84.6 634.0 C83.0 640.4 82.3 643.5 80.9 650.0 C79.5 656.5 77.5 665.3 76.3 673.0 C75.1 680.7 74.0 688.6 73.5 696.3 C73.0 704.0 73.1 712.4 73.5 719.4 C73.9 726.4 75.2 734.2 75.9 738.5 C76.6 742.8 77.2 743.9 77.4 745.0 L62.5 743.5 C62.7 738.2 63.0 722.6 63.5 712.0 C64.0 701.4 64.1 692.0 65.5 680.0 C66.9 668.0 68.9 652.5 72.0 640.0 C75.1 627.5 79.7 617.3 84.0 605.0 C88.3 592.7 94.0 575.8 98.0 566.0 C102.0 556.2 105.5 550.4 108.0 546.0 C110.5 541.6 112.1 540.8 112.9 539.7 Z" fill="#868987"  transform="matrix(-1 0 0 1 443.0 0)"/><path d="M132.1 552.0 C132.1 560.0 132.0 584.6 132.2 600.0 C132.3 615.4 132.4 630.8 133.0 644.4 C133.6 658.0 133.9 671.1 135.9 681.5 C137.9 691.9 143.3 702.5 144.8 706.7 C143.8 710.4 141.9 722.2 138.9 728.9 C135.9 735.6 129.0 743.7 127.0 746.7 C126.4 743.1 124.2 734.5 123.5 725.0 C122.8 715.5 122.4 704.2 122.5 690.0 C122.6 675.8 123.3 656.7 124.0 640.0 C124.7 623.3 125.5 604.0 126.5 590.0 C127.5 576.0 129.1 562.3 130.0 556.0 C130.9 549.7 131.8 552.7 132.1 552.0 Z" fill="url(#fsg)" /><path d="M132.1 552.0 C132.1 560.0 132.0 584.6 132.2 600.0 C132.3 615.4 132.4 630.8 133.0 644.4 C133.6 658.0 133.9 671.1 135.9 681.5 C137.9 691.9 143.3 702.5 144.8 706.7 C143.8 710.4 141.9 722.2 138.9 728.9 C135.9 735.6 129.0 743.7 127.0 746.7 C126.4 743.1 124.2 734.5 123.5 725.0 C122.8 715.5 122.4 704.2 122.5 690.0 C122.6 675.8 123.3 656.7 124.0 640.0 C124.7 623.3 125.5 604.0 126.5 590.0 C127.5 576.0 129.1 562.3 130.0 556.0 C130.9 549.7 131.8 552.7 132.1 552.0 Z" fill="url(#fsg)"  transform="matrix(-1 0 0 1 443.0 0)"/></g></g><path d="M44.1 734.8 L37.0 757.0 L38.0 760.5 L40.5 762.0 L63.3 768.9 L75.2 747.4 L77.4 745.2 C76.9 745.3 78.0 746.5 74.4 746.0 C70.8 745.5 61.0 744.1 55.9 742.2 C50.8 740.3 46.1 736.0 44.1 734.8 Z" fill="#8f9290" /><path d="M44.1 734.8 L37.0 757.0 L38.0 760.5 L40.5 762.0 L63.3 768.9 L75.2 747.4 L77.4 745.2 C76.9 745.3 78.0 746.5 74.4 746.0 C70.8 745.5 61.0 744.1 55.9 742.2 C50.8 740.3 46.1 736.0 44.1 734.8 Z" fill="#8f9290"  transform="matrix(-1 0 0 1 443.0 0)"/><path d="M81.9 751.0 L81.9 773.3 L83.3 776.3 L86.0 777.0 L110.7 779.3 L114.4 757.0 L117.4 754.0 C116.4 754.4 116.2 756.4 111.5 756.3 C106.8 756.2 94.2 754.5 89.3 753.3 C84.4 752.1 84.0 750.8 82.0 749.0 C80.0 747.2 78.2 743.6 77.4 742.5 Z" fill="#8f9290" /><path d="M81.9 751.0 L81.9 773.3 L83.3 776.3 L86.0 777.0 L110.7 779.3 L114.4 757.0 L117.4 754.0 C116.4 754.4 116.2 756.4 111.5 756.3 C106.8 756.2 94.2 754.5 89.3 753.3 C84.4 752.1 84.0 750.8 82.0 749.0 C80.0 747.2 78.2 743.6 77.4 742.5 Z" fill="#8f9290"  transform="matrix(-1 0 0 1 443.0 0)"/><path d="M81.9 751.0 L81.9 773.3 L83.3 776.3 L86.0 777.0 L110.7 779.3 L114.4 757.0 L117.4 754.0 C116.4 754.4 116.2 756.4 111.5 756.3 C106.8 756.2 94.2 754.5 89.3 753.3 C84.4 752.1 84.0 750.8 82.0 749.0 C80.0 747.2 78.2 743.6 77.4 742.5 Z" fill="url(#rbg)" /><path d="M81.9 751.0 L81.9 773.3 L83.3 776.3 L86.0 777.0 L110.7 779.3 L114.4 757.0 L117.4 754.0 C116.4 754.4 116.2 756.4 111.5 756.3 C106.8 756.2 94.2 754.5 89.3 753.3 C84.4 752.1 84.0 750.8 82.0 749.0 C80.0 747.2 78.2 743.6 77.4 742.5 Z" fill="url(#rbg)"  transform="matrix(-1 0 0 1 443.0 0)"/><path d="M44.1 734.8 L37.0 757.0 L38.0 760.5 L40.5 762.0 L63.3 768.9 L75.2 747.4 L77.4 745.2 C76.9 745.3 78.0 746.5 74.4 746.0 C70.8 745.5 61.0 744.1 55.9 742.2 C50.8 740.3 46.1 736.0 44.1 734.8 Z" fill="url(#rbg)" /><path d="M44.1 734.8 L37.0 757.0 L38.0 760.5 L40.5 762.0 L63.3 768.9 L75.2 747.4 L77.4 745.2 C76.9 745.3 78.0 746.5 74.4 746.0 C70.8 745.5 61.0 744.1 55.9 742.2 C50.8 740.3 46.1 736.0 44.1 734.8 Z" fill="url(#rbg)"  transform="matrix(-1 0 0 1 443.0 0)"/><path d="M146.8 707.5 C152.3 708.7 167.6 712.8 180.0 714.5 C192.4 716.2 207.7 718.0 221.5 718.0 C235.3 718.0 250.6 716.2 263.0 714.5 C275.4 712.8 290.7 708.7 296.2 707.5 L296.7 731.5 C292.8 733.1 281.9 738.8 273.0 741.2 C264.1 743.7 251.6 745.2 243.0 746.2 C234.4 747.2 228.7 747.5 221.5 747.5 C214.3 747.5 208.6 747.2 200.0 746.2 C191.4 745.2 178.9 743.7 170.0 741.2 C161.1 738.8 150.2 733.1 146.3 731.5 Z" fill="#959896"/><path d="M146.8 707.5 C152.3 708.7 167.6 712.8 180.0 714.5 C192.4 716.2 207.7 718.0 221.5 718.0 C235.3 718.0 250.6 716.2 263.0 714.5 C275.4 712.8 290.7 708.7 296.2 707.5 L296.7 731.5 C292.8 733.1 281.9 738.8 273.0 741.2 C264.1 743.7 251.6 745.2 243.0 746.2 C234.4 747.2 228.7 747.5 221.5 747.5 C214.3 747.5 208.6 747.2 200.0 746.2 C191.4 745.2 178.9 743.7 170.0 741.2 C161.1 738.8 150.2 733.1 146.3 731.5 Z" fill="url(#rbg)"/><path d="M148.7 727.8 C153.9 729.2 167.9 734.1 180.0 736.2 C192.1 738.3 207.7 740.2 221.5 740.2 C235.3 740.2 250.9 738.3 263.0 736.2 C275.1 734.1 289.1 729.2 294.3 727.8 L296.7 731.5 C292.8 733.1 281.9 738.8 273.0 741.2 C264.1 743.7 251.6 745.2 243.0 746.2 C234.4 747.2 228.7 747.5 221.5 747.5 C214.3 747.5 208.6 747.2 200.0 746.2 C191.4 745.2 178.9 743.7 170.0 741.2 C161.1 738.8 150.2 733.1 146.3 731.5 Z" fill="#7e817f"/><path d="M193.5 468.0 C194.8 468.2 197.9 468.5 201.0 469.2 C204.1 469.9 208.6 471.4 212.0 472.0 C215.4 472.6 218.3 473.0 221.5 473.0 C224.7 473.0 227.6 472.6 231.0 472.0 C234.4 471.4 238.9 469.9 242.0 469.2 C245.1 468.5 248.2 468.2 249.5 468.0 L249.5 479.7 C247.2 480.6 240.7 483.6 236.0 485.0 C231.3 486.4 226.3 487.9 221.5 487.9 C216.7 487.9 211.7 486.4 207.0 485.0 C202.3 483.6 195.8 480.6 193.5 479.7 Z" fill="#949795"/><path d="M190.9 480.5 C190.9 481.8 190.9 485.4 191.2 488.0 C191.5 490.6 191.7 493.6 192.5 496.0 C193.3 498.4 194.5 500.4 196.0 502.5 C197.5 504.6 199.3 506.7 201.6 508.4 C203.9 510.1 207.6 511.8 210.0 512.8 C212.4 513.8 214.1 513.9 216.0 514.2 C217.9 514.5 219.7 514.7 221.5 514.7 C223.3 514.7 225.1 514.5 227.0 514.2 C228.9 513.9 230.6 513.8 233.0 512.8 C235.4 511.8 239.1 510.1 241.4 508.4 C243.7 506.7 245.5 504.6 247.0 502.5 C248.5 500.4 249.7 498.4 250.5 496.0 C251.3 493.6 251.5 490.6 251.8 488.0 C252.1 485.4 252.1 481.8 252.1 480.5 L249.5 479.7 C247.2 480.6 240.7 483.6 236.0 485.0 C231.3 486.4 226.3 487.9 221.5 487.9 C216.7 487.9 211.7 486.4 207.0 485.0 C202.3 483.6 195.8 480.6 193.5 479.7 Z" fill="url(#nkg)"/><defs><clipPath id="rcg"><path d="M181.6 481.0 C181.7 482.5 181.7 487.2 182.0 490.0 C182.3 492.8 182.6 495.5 183.4 498.0 C184.2 500.5 185.5 502.7 187.0 505.0 C188.5 507.3 190.3 509.5 192.5 511.6 C194.7 513.7 197.1 515.9 200.0 517.7 C202.9 519.5 207.3 521.3 210.0 522.3 C212.7 523.3 214.1 523.2 216.0 523.5 C217.9 523.8 219.7 524.0 221.5 524.0 C223.3 524.0 225.1 523.8 227.0 523.5 C228.9 523.2 230.3 523.3 233.0 522.3 C235.7 521.3 240.1 519.5 243.0 517.7 C245.9 515.9 248.3 513.7 250.5 511.6 C252.7 509.5 254.5 507.3 256.0 505.0 C257.5 502.7 258.8 500.5 259.6 498.0 C260.4 495.5 260.7 492.8 261.0 490.0 C261.3 487.2 261.3 482.5 261.4 481.0 L252.1 480.5 C252.1 481.8 252.1 485.4 251.8 488.0 C251.5 490.6 251.3 493.6 250.5 496.0 C249.7 498.4 248.5 500.4 247.0 502.5 C245.5 504.6 243.7 506.7 241.4 508.4 C239.1 510.1 235.4 511.8 233.0 512.8 C230.6 513.8 228.9 513.9 227.0 514.2 C225.1 514.5 223.3 514.7 221.5 514.7 C219.7 514.7 217.9 514.5 216.0 514.2 C214.1 513.9 212.4 513.8 210.0 512.8 C207.6 511.8 203.9 510.1 201.6 508.4 C199.3 506.7 197.5 504.6 196.0 502.5 C194.5 500.4 193.3 498.4 192.5 496.0 C191.7 493.6 191.5 490.6 191.2 488.0 C190.9 485.4 190.9 481.8 190.9 480.5 Z"/></clipPath></defs><path d="M181.6 481.0 C181.7 482.5 181.7 487.2 182.0 490.0 C182.3 492.8 182.6 495.5 183.4 498.0 C184.2 500.5 185.5 502.7 187.0 505.0 C188.5 507.3 190.3 509.5 192.5 511.6 C194.7 513.7 197.1 515.9 200.0 517.7 C202.9 519.5 207.3 521.3 210.0 522.3 C212.7 523.3 214.1 523.2 216.0 523.5 C217.9 523.8 219.7 524.0 221.5 524.0 C223.3 524.0 225.1 523.8 227.0 523.5 C228.9 523.2 230.3 523.3 233.0 522.3 C235.7 521.3 240.1 519.5 243.0 517.7 C245.9 515.9 248.3 513.7 250.5 511.6 C252.7 509.5 254.5 507.3 256.0 505.0 C257.5 502.7 258.8 500.5 259.6 498.0 C260.4 495.5 260.7 492.8 261.0 490.0 C261.3 487.2 261.3 482.5 261.4 481.0 L252.1 480.5 C252.1 481.8 252.1 485.4 251.8 488.0 C251.5 490.6 251.3 493.6 250.5 496.0 C249.7 498.4 248.5 500.4 247.0 502.5 C245.5 504.6 243.7 506.7 241.4 508.4 C239.1 510.1 235.4 511.8 233.0 512.8 C230.6 513.8 228.9 513.9 227.0 514.2 C225.1 514.5 223.3 514.7 221.5 514.7 C219.7 514.7 217.9 514.5 216.0 514.2 C214.1 513.9 212.4 513.8 210.0 512.8 C207.6 511.8 203.9 510.1 201.6 508.4 C199.3 506.7 197.5 504.6 196.0 502.5 C194.5 500.4 193.3 498.4 192.5 496.0 C191.7 493.6 191.5 490.6 191.2 488.0 C190.9 485.4 190.9 481.8 190.9 480.5 Z" fill="#979a98"/><g clip-path="url(#rcg)" filter="url(#blg)"><path d="M181.6 481.0 C181.7 482.5 181.7 487.2 182.0 490.0 C182.3 492.8 182.6 495.5 183.4 498.0 C184.2 500.5 185.5 502.7 187.0 505.0 C188.5 507.3 190.3 509.5 192.5 511.6 C194.7 513.7 197.1 515.9 200.0 517.7 C202.9 519.5 207.3 521.3 210.0 522.3 C212.7 523.3 214.1 523.2 216.0 523.5 C217.9 523.8 219.7 524.0 221.5 524.0 C223.3 524.0 225.1 523.8 227.0 523.5 C228.9 523.2 230.3 523.3 233.0 522.3 C235.7 521.3 240.1 519.5 243.0 517.7 C245.9 515.9 248.3 513.7 250.5 511.6 C252.7 509.5 254.5 507.3 256.0 505.0 C257.5 502.7 258.8 500.5 259.6 498.0 C260.4 495.5 260.7 492.8 261.0 490.0 C261.3 487.2 261.3 482.5 261.4 481.0" fill="none" stroke="#5e6160" stroke-width="3.2" opacity="0.8"/><path d="M190.9 480.5 C190.9 481.8 190.9 485.4 191.2 488.0 C191.5 490.6 191.7 493.6 192.5 496.0 C193.3 498.4 194.5 500.4 196.0 502.5 C197.5 504.6 199.3 506.7 201.6 508.4 C203.9 510.1 207.6 511.8 210.0 512.8 C212.4 513.8 214.1 513.9 216.0 514.2 C217.9 514.5 219.7 514.7 221.5 514.7 C223.3 514.7 225.1 514.5 227.0 514.2 C228.9 513.9 230.6 513.8 233.0 512.8 C235.4 511.8 239.1 510.1 241.4 508.4 C243.7 506.7 245.5 504.6 247.0 502.5 C248.5 500.4 249.7 498.4 250.5 496.0 C251.3 493.6 251.5 490.6 251.8 488.0 C252.1 485.4 252.1 481.8 252.1 480.5" fill="none" stroke="#5e6160" stroke-width="3.5" opacity="0.6"/></g><path d="M181.6 481.0 C181.7 482.5 181.7 487.2 182.0 490.0 C182.3 492.8 182.6 495.5 183.4 498.0 C184.2 500.5 185.5 502.7 187.0 505.0 C188.5 507.3 190.3 509.5 192.5 511.6 C194.7 513.7 197.1 515.9 200.0 517.7 C202.9 519.5 207.3 521.3 210.0 522.3 C212.7 523.3 214.1 523.2 216.0 523.5 C217.9 523.8 219.7 524.0 221.5 524.0 C223.3 524.0 225.1 523.8 227.0 523.5 C228.9 523.2 230.3 523.3 233.0 522.3 C235.7 521.3 240.1 519.5 243.0 517.7 C245.9 515.9 248.3 513.7 250.5 511.6 C252.7 509.5 254.5 507.3 256.0 505.0 C257.5 502.7 258.8 500.5 259.6 498.0 C260.4 495.5 260.7 492.8 261.0 490.0 C261.3 487.2 261.3 482.5 261.4 481.0" fill="none" stroke="#5e6160" stroke-width="1" opacity="0.8"/><g fill="none" stroke="#333333" stroke-width="1.45" stroke-linecap="round"><path d="M78.5 744.5 C78.1 743.5 76.7 742.7 75.9 738.5 C75.1 734.3 73.9 726.4 73.5 719.4 C73.1 712.4 73.0 704.0 73.5 696.3 C74.0 688.6 75.1 680.7 76.3 673.0 C77.5 665.3 79.5 656.5 80.9 650.0 C82.3 643.5 83.0 640.4 84.6 634.0 C86.1 627.6 88.2 619.6 90.2 611.9 C92.2 604.2 93.9 597.5 96.7 587.8 C99.5 578.1 104.6 561.6 107.3 553.6 C110.0 545.6 110.9 544.0 112.9 539.7 C114.9 535.4 117.1 531.6 119.4 527.7 C121.7 523.9 124.0 520.2 126.8 516.6 C129.6 513.0 132.6 509.6 136.0 506.4 C139.4 503.1 143.2 499.9 147.1 497.1 C151.0 494.3 154.9 492.0 159.2 489.7 C163.5 487.4 168.5 485.0 173.1 483.2 C177.7 481.4 183.6 479.2 187.0 478.6 C190.4 478.0 192.4 479.5 193.5 479.7 C195.8 480.6 202.3 483.6 207.0 485.0 C211.7 486.4 216.7 487.9 221.5 487.9 C226.3 487.9 231.3 486.4 236.0 485.0 C240.7 483.6 247.2 480.6 249.5 479.7 C250.6 479.5 252.6 478.0 256.0 478.6 C259.4 479.2 265.3 481.4 269.9 483.2 C274.5 485.0 279.5 487.4 283.8 489.7 C288.1 492.0 292.0 494.3 295.9 497.1 C299.8 499.9 303.6 503.1 307.0 506.4 C310.4 509.6 313.4 513.0 316.2 516.6 C319.0 520.2 321.3 523.9 323.6 527.7 C325.9 531.6 328.1 535.4 330.1 539.7 C332.1 544.0 333.0 545.6 335.7 553.6 C338.4 561.6 343.4 578.1 346.3 587.8 C349.2 597.5 350.8 604.2 352.8 611.9 C354.8 619.6 356.8 627.6 358.4 634.0 C359.9 640.4 360.7 643.5 362.1 650.0 C363.5 656.5 365.5 665.3 366.7 673.0 C367.9 680.7 369.0 688.6 369.5 696.3 C370.0 704.0 369.9 712.4 369.5 719.4 C369.1 726.4 367.9 734.3 367.1 738.5 C366.3 742.7 364.9 743.5 364.5 744.5"/><path d="M131.8 540.0 C131.9 550.0 132.0 582.6 132.2 600.0 C132.4 617.4 132.4 630.8 133.0 644.4 C133.6 658.0 133.9 671.1 135.9 681.5 C137.9 691.9 143.3 702.5 144.8 706.7 M311.2 540.0 C311.1 550.0 311.0 582.6 310.8 600.0 C310.6 617.4 310.6 630.8 310.0 644.4 C309.4 658.0 309.1 671.1 307.1 681.5 C305.1 691.9 299.7 702.5 298.2 706.7"/><path d="M112.5 543.5 C114.2 544.0 120.0 545.2 123.0 546.5 C126.0 547.8 129.0 549.6 130.5 551.0 C132.0 552.4 131.8 554.3 132.0 555.0 M330.5 543.5 C328.8 544.0 323.0 545.2 320.0 546.5 C317.0 547.8 314.0 549.6 312.5 551.0 C311.0 552.4 311.2 554.3 311.0 555.0"/><path d="M146.8 707.5 C152.3 708.7 167.6 712.8 180.0 714.5 C192.4 716.2 207.7 718.0 221.5 718.0 C235.3 718.0 250.6 716.2 263.0 714.5 C275.4 712.8 290.7 708.7 296.2 707.5"/><path d="M148.7 727.8 C153.9 729.2 167.9 734.1 180.0 736.2 C192.1 738.3 207.7 740.2 221.5 740.2 C235.3 740.2 250.9 738.3 263.0 736.2 C275.1 734.1 289.1 729.2 294.3 727.8"/><path d="M193.9 470.5 V480 M249.1 470.5 V480"/><path d="M77.4 742.5 C78.2 743.6 80.0 747.2 82.0 749.0 C84.0 750.8 84.4 752.1 89.3 753.3 C94.2 754.5 106.8 756.2 111.5 756.3 C116.2 756.4 116.4 754.4 117.4 754.0 M365.6 742.5 C364.8 743.6 363.0 747.2 361.0 749.0 C359.0 750.8 358.6 752.1 353.7 753.3 C348.8 754.5 336.2 756.2 331.5 756.3 C326.8 756.4 326.6 754.4 325.6 754.0"/><path d="M44.1 734.8 C46.1 736.0 50.8 740.3 55.9 742.2 C61.0 744.1 71.3 745.4 74.4 746.0 M398.9 734.8 C396.9 736.0 392.2 740.3 387.1 742.2 C382.1 744.1 371.7 745.4 368.6 746.0"/><path d="M192.0 488.5 C194.2 489.5 200.1 493.2 205.0 494.5 C209.9 495.8 216.0 496.5 221.5 496.5 C227.0 496.5 233.1 495.8 238.0 494.5 C242.9 493.2 248.8 489.5 251.0 488.5" stroke-width="1.16" opacity="0.6"/><path d="M192.3 491.5 C194.6 492.5 201.1 496.2 206.0 497.5 C210.9 498.8 216.3 499.3 221.5 499.3 C226.7 499.3 232.1 498.8 237.0 497.5 C241.9 496.2 248.4 492.5 250.7 491.5" stroke-width="1.16" opacity="0.6"/></g><path d="M190.9 480.5 C190.9 481.8 190.9 485.4 191.2 488.0 C191.5 490.6 191.7 493.6 192.5 496.0 C193.3 498.4 194.5 500.4 196.0 502.5 C197.5 504.6 199.3 506.7 201.6 508.4 C203.9 510.1 207.6 511.8 210.0 512.8 C212.4 513.8 214.1 513.9 216.0 514.2 C217.9 514.5 219.7 514.7 221.5 514.7 C223.3 514.7 225.1 514.5 227.0 514.2 C228.9 513.9 230.6 513.8 233.0 512.8 C235.4 511.8 239.1 510.1 241.4 508.4 C243.7 506.7 245.5 504.6 247.0 502.5 C248.5 500.4 249.7 498.4 250.5 496.0 C251.3 493.6 251.5 490.6 251.8 488.0 C252.1 485.4 252.1 481.8 252.1 480.5" fill="none" stroke="#242424" stroke-width="1.885"/><path d="M163.8 480.4 C166.1 479.3 174.0 475.7 177.7 474.0 C181.4 472.3 183.6 471.1 186.0 470.0 C188.4 468.9 190.0 467.9 192.3 467.7 C194.6 467.5 196.7 468.0 200.0 468.6 C203.3 469.2 208.4 470.9 212.0 471.6 C215.6 472.3 218.3 472.6 221.5 472.6 C224.7 472.6 227.4 472.3 231.0 471.6 C234.6 470.9 239.7 469.2 243.0 468.6 C246.3 468.0 248.4 467.5 250.7 467.7 C253.0 467.9 254.6 468.9 257.0 470.0 C259.4 471.1 261.6 472.3 265.3 474.0 C269.0 475.7 276.9 479.3 279.2 480.4 C281.2 481.6 287.3 485.3 291.2 487.9 C295.1 490.5 299.2 493.6 302.3 496.2 C305.4 498.8 307.4 501.1 309.7 503.6 C312.0 506.1 313.9 507.9 316.2 511.0 C318.5 514.1 321.3 518.4 323.6 522.1 C325.9 525.8 327.9 529.7 330.1 533.2 C332.3 536.8 334.2 539.5 336.6 543.4 C339.0 547.3 340.1 549.1 344.5 556.5 C348.9 563.9 358.2 578.6 363.0 587.8 C367.8 597.0 370.1 604.2 373.2 611.9 C376.3 619.6 377.9 623.8 381.5 634.0 C385.1 644.2 391.2 662.6 394.5 673.0 C397.8 683.4 399.5 689.3 401.0 696.3 C402.5 703.3 403.6 709.4 403.7 714.8 C403.8 720.2 402.3 725.4 401.5 728.7 C400.7 732.0 399.3 733.8 398.9 734.8 L406.0 757.0 L405.0 760.5 L402.5 762.0 L379.7 768.9 L367.8 747.4 L365.6 745.2 L361.1 751.0 L361.1 773.3 L359.7 776.3 L357.0 777.0 L332.3 779.3 L328.6 757.0 L325.6 754.0 C324.0 752.8 319.6 750.9 316.0 746.7 C312.4 742.5 307.1 734.9 304.1 728.9 C301.1 722.9 299.2 714.0 298.2 711.0 L296.7 731.5 C292.8 733.1 281.9 738.8 273.0 741.2 C264.1 743.7 251.6 745.2 243.0 746.2 C234.4 747.2 228.7 747.5 221.5 747.5 C214.3 747.5 208.6 747.2 200.0 746.2 C191.4 745.2 178.9 743.7 170.0 741.2 C161.1 738.8 150.2 733.1 146.3 731.5 L144.8 711.0 C143.8 714.0 141.9 722.9 138.9 728.9 C135.9 734.9 130.6 742.5 127.0 746.7 C123.4 750.9 119.0 752.8 117.4 754.0 L114.4 757.0 L110.7 779.3 L86.0 777.0 L83.3 776.3 L81.9 773.3 L81.9 751.0 L77.4 745.2 L75.2 747.4 L63.3 768.9 L40.5 762.0 L38.0 760.5 L37.0 757.0 L44.1 734.8 C43.7 733.8 42.3 732.0 41.5 728.7 C40.7 725.4 39.2 720.2 39.3 714.8 C39.4 709.4 40.5 703.3 42.0 696.3 C43.5 689.3 45.2 683.4 48.5 673.0 C51.8 662.6 58.0 644.2 61.5 634.0 C65.0 623.8 66.7 619.6 69.8 611.9 C72.9 604.2 75.2 597.0 80.0 587.8 C84.8 578.6 94.1 563.9 98.5 556.5 C102.9 549.1 104.0 547.3 106.4 543.4 C108.8 539.5 110.7 536.8 112.9 533.2 C115.1 529.7 117.1 525.8 119.4 522.1 C121.7 518.4 124.5 514.1 126.8 511.0 C129.1 507.9 131.0 506.1 133.3 503.6 C135.6 501.1 137.6 498.8 140.7 496.2 C143.8 493.6 148.0 490.5 151.8 487.9 C155.7 485.3 161.8 481.6 163.8 480.4 Z" fill="none" stroke="#242424" stroke-width="2.9" stroke-linejoin="round"/></g></svg>
</div>
<div id="gray" class="a"></div>
<div id="vscroll" class="a">
<svg class="a" style="left:5px;top:6px" width="12" height="8"><path d="M1 7 L6 2 L11 7" fill="none" stroke="#7a7a7a" stroke-width="1.5"/></svg>
<div class="a" style="left:2px;top:390px;width:18px;height:33px;border-radius:9px;background:#626262"></div>
<svg class="a" style="left:5px;top:919px" width="12" height="8"><path d="M1 1 L6 6 L11 1" fill="none" stroke="#8a8a8a" stroke-width="1.5"/></svg>
</div>
<div class="a" style="left:980px;top:146px;width:303px;height:347px;background:#5a5a5a;border-radius:4px 4px 0 0;box-shadow:1px 0 2px rgba(0,0,0,0.5);overflow:hidden">
<div class="a" style="left:0px;top:0px;width:303px;height:17px;background:#494949;"></div>
<div class="a" style="left:0px;top:17px;width:303px;height:2px;background:#3f3f3f;"></div>
<div class="a" style="left:0px;top:19px;width:303px;height:35px;background:#4b4b4b;"></div>
<div class="a" style="left:145px;top:19px;width:81px;height:35px;background:#5a5a5a;"></div>
<svg class="a" style="left:264px;top:5px" width="10" height="9"><path d="M4 1 L0.5 4.5 L4 8 Z M9 1 L5.5 4.5 L9 8 Z" fill="#bdbdbd"/></svg>
<svg class="a" style="left:287px;top:4px" width="11" height="11"><path d="M1 1 L10 10 M10 1 L1 10" stroke="#e6e6e6" stroke-width="2"/></svg>
<div class="a" style="left:13px;top:29px;font-size:12.6px;line-height:14px;font-weight:bold;color:#a3a3a3">Stroke</div>
<div class="a" style="left:80px;top:29px;font-size:12.6px;line-height:14px;font-weight:bold;color:#a3a3a3">Gradient</div>
<div class="a" style="left:157px;top:29px;font-size:12.2px;line-height:14px;font-weight:bold;color:#e6e6e6">Swatches</div>
<div class="a" style="left:281px;top:32px;width:14px;height:2px;background:#a8a8a8;"></div>
<div class="a" style="left:281px;top:36px;width:14px;height:2px;background:#a8a8a8;"></div>
<div class="a" style="left:281px;top:40px;width:14px;height:2px;background:#a8a8a8;"></div>
<div class="a" style="left:22px;top:75px;width:25px;height:25px;background:#222;border:1px solid #e4e4e4"></div>
<div class="a" style="left:28px;top:82px;width:13px;height:13px;background:#5e5e5e;border:1px solid #d8d8d8"></div>
<div class="a" style="left:9px;top:63px;width:26px;height:25px;background:#a9a9a9;border:1.5px solid #e8e8e8"></div>
<div class="a" style="left:233px;top:61px;width:29px;height:31px;background:#565656;border:1px solid #606060"></div>
<div class="a" style="left:240px;top:68px;width:16px;height:2.1999999999999886px;background:#c8c8c8;"></div>
<div class="a" style="left:240px;top:73.5px;width:16px;height:2.1999999999999886px;background:#c8c8c8;"></div>
<div class="a" style="left:240px;top:79px;width:16px;height:2.1999999999999886px;background:#c8c8c8;"></div>
<div class="a" style="left:240px;top:84.5px;width:16px;height:2.1999999999999886px;background:#c8c8c8;"></div>
<div class="a" style="left:265px;top:63px;width:29px;height:28px;background:#383838;"></div>
<div class="a" style="left:271.0px;top:68.0px;width:5.5px;height:5.5px;background:#f0f0f0;"></div>
<div class="a" style="left:271.0px;top:74.69999999999999px;width:5.5px;height:5.5px;background:#f0f0f0;"></div>
<div class="a" style="left:271.0px;top:81.4px;width:5.5px;height:5.5px;background:#f0f0f0;"></div>
<div class="a" style="left:277.70000000000005px;top:68.0px;width:5.5px;height:5.5px;background:#f0f0f0;"></div>
<div class="a" style="left:277.70000000000005px;top:74.69999999999999px;width:5.5px;height:5.5px;background:#f0f0f0;"></div>
<div class="a" style="left:277.70000000000005px;top:81.4px;width:5.5px;height:5.5px;background:#f0f0f0;"></div>
<div class="a" style="left:284.4000000000001px;top:68.0px;width:5.5px;height:5.5px;background:#f0f0f0;"></div>
<div class="a" style="left:284.4000000000001px;top:74.69999999999999px;width:5.5px;height:5.5px;background:#f0f0f0;"></div>
<div class="a" style="left:284.4000000000001px;top:81.4px;width:5.5px;height:5.5px;background:#f0f0f0;"></div>
<div class="a" style="left:6px;top:105px;width:290px;height:206px;background:transparent;border:1px solid #626262"></div>
<svg class="a" style="left:9.5px;top:109px" width="18" height="18"><rect width="17.4" height="17.4" fill="#f2f2f2"/><path d="M1 16.5 L16.5 1" stroke="#c8202a" stroke-width="2.4"/></svg>
<svg class="a" style="left:27.7px;top:109px" width="18" height="18"><rect width="17.4" height="17.4" fill="#f0f0f0"/><circle cx="8.7" cy="8.7" r="5.5" fill="none" stroke="#777" stroke-width="1.2"/><circle cx="8.7" cy="8.7" r="2.2" fill="none" stroke="#777" stroke-width="1"/><path d="M8.7 1 V16.5 M1 8.7 H16.5" stroke="#777" stroke-width="1"/></svg>
<div class="a" style="left:45.940000000000055px;top:109px;width:17.40000000000009px;height:17.399999999999977px;background:#efefef;"></div>
<div class="a" style="left:64.16000000000008px;top:109px;width:17.40000000000009px;height:17.399999999999977px;background:#111111;"></div>
<div class="a" style="left:82.38000000000011px;top:109px;width:17.40000000000009px;height:17.399999999999977px;background:#e8121a;"></div>
<div class="a" style="left:100.59999999999991px;top:109px;width:17.40000000000009px;height:17.399999999999977px;background:#e8e41c;"></div>
<div class="a" style="left:118.81999999999994px;top:109px;width:17.40000000000009px;height:17.399999999999977px;background:#20e01c;"></div>
<div class="a" style="left:137.03999999999996px;top:109px;width:17.40000000000009px;height:17.399999999999977px;background:#20e0e0;"></div>
<div class="a" style="left:155.26px;top:109px;width:17.40000000000009px;height:17.399999999999977px;background:#1414e0;"></div>
<div class="a" style="left:173.48000000000002px;top:109px;width:17.40000000000009px;height:17.399999999999977px;background:#e014e0;"></div>
<div class="a" style="left:191.70000000000005px;top:109px;width:17.40000000000009px;height:17.399999999999977px;background:#d8343a;"></div>
<div class="a" style="left:209.92000000000007px;top:109px;width:17.40000000000009px;height:17.399999999999977px;background:#e4282c;"></div>
<div class="a" style="left:228.13999999999987px;top:109px;width:17.40000000000009px;height:17.399999999999977px;background:#ec6428;"></div>
<div class="a" style="left:246.3599999999999px;top:109px;width:17.40000000000009px;height:17.399999999999977px;background:#ef9030;"></div>
<div class="a" style="left:9.5px;top:127px;width:17.399999999999977px;height:17.399999999999977px;background:#e9a848;"></div>
<div class="a" style="left:27.720000000000027px;top:127px;width:17.40000000000009px;height:17.399999999999977px;background:#ead83c;"></div>
<div class="a" style="left:45.940000000000055px;top:127px;width:17.40000000000009px;height:17.399999999999977px;background:#cdd03c;"></div>
<div class="a" style="left:64.16000000000008px;top:127px;width:17.40000000000009px;height:17.399999999999977px;background:#9cc448;"></div>
<div class="a" style="left:82.38000000000011px;top:127px;width:17.40000000000009px;height:17.399999999999977px;background:#3cb04e;"></div>
<div class="a" style="left:100.59999999999991px;top:127px;width:17.40000000000009px;height:17.399999999999977px;background:#1e9a4a;"></div>
<div class="a" style="left:118.81999999999994px;top:127px;width:17.40000000000009px;height:17.399999999999977px;background:#177844;"></div>
<div class="a" style="left:137.03999999999996px;top:127px;width:17.40000000000009px;height:17.399999999999977px;background:#26aa78;"></div>
<div class="a" style="left:155.26px;top:127px;width:17.40000000000009px;height:17.399999999999977px;background:#22a8aa;"></div>
<div class="a" style="left:173.48000000000002px;top:127px;width:17.40000000000009px;height:17.399999999999977px;background:#30acd8;"></div>
<div class="a" style="left:191.70000000000005px;top:127px;width:17.40000000000009px;height:17.399999999999977px;background:#2084cc;"></div>
<div class="a" style="left:209.92000000000007px;top:127px;width:17.40000000000009px;height:17.399999999999977px;background:#3a50b4;"></div>
<div class="a" style="left:228.13999999999987px;top:127px;width:17.40000000000009px;height:17.399999999999977px;background:#2a2a92;"></div>
<div class="a" style="left:246.3599999999999px;top:127px;width:17.40000000000009px;height:17.399999999999977px;background:#7c3aaa;"></div>
<div class="a" style="left:9.5px;top:145px;width:17.399999999999977px;height:17.399999999999977px;background:#a23caa;"></div>
<div class="a" style="left:27.720000000000027px;top:145px;width:17.40000000000009px;height:17.399999999999977px;background:#c0208a;"></div>
<div class="a" style="left:45.940000000000055px;top:145px;width:17.40000000000009px;height:17.399999999999977px;background:#d8246e;"></div>
<div class="a" style="left:64.16000000000008px;top:145px;width:17.40000000000009px;height:17.399999999999977px;background:#e22c7e;"></div>
<div class="a" style="left:82.38000000000011px;top:145px;width:17.40000000000009px;height:17.399999999999977px;background:#c0a896;"></div>
<div class="a" style="left:100.59999999999991px;top:145px;width:17.40000000000009px;height:17.399999999999977px;background:#a89080;"></div>
<div class="a" style="left:118.81999999999994px;top:145px;width:17.40000000000009px;height:17.399999999999977px;background:#8a7468;"></div>
<div class="a" style="left:137.03999999999996px;top:145px;width:17.40000000000009px;height:17.399999999999977px;background:#6c5a54;"></div>
<div class="a" style="left:155.26px;top:145px;width:17.40000000000009px;height:17.399999999999977px;background:#c89e70;"></div>
<div class="a" style="left:173.48000000000002px;top:145px;width:17.40000000000009px;height:17.399999999999977px;background:#b88e5a;"></div>
<div class="a" style="left:191.70000000000005px;top:145px;width:17.40000000000009px;height:17.399999999999977px;background:#a87640;"></div>
<div class="a" style="left:209.92000000000007px;top:145px;width:17.40000000000009px;height:17.399999999999977px;background:#8c5c2c;"></div>
<div class="a" style="left:228.13999999999987px;top:145px;width:17.40000000000009px;height:17.399999999999977px;background:#724218;"></div>
<div class="a" style="left:246.3599999999999px;top:145px;width:17.40000000000009px;height:17.399999999999977px;background:#582c10;"></div>
<div class="a" style="left:9.5px;top:163px;width:17.399999999999977px;height:17.399999999999977px;background:linear-gradient(90deg,#f4f4f4,#9a9a9a 55%,#1a1a1a);"></div>
<div class="a" style="left:27.720000000000027px;top:163px;width:17.40000000000009px;height:17.399999999999977px;background:linear-gradient(90deg,#e87020,#f0b820);"></div>
<div class="a" style="left:45.940000000000055px;top:163px;width:17.40000000000009px;height:17.399999999999977px;background:linear-gradient(135deg,#50c8d0,#a8e0e8 50%,#50c0c8);"></div>
<svg class="a" style="left:64.2px;top:163px" width="18" height="18"><rect width="17.4" height="17.4" fill="#1e5ae8"/><path d="M17.4 9 L17.4 17.4 L9 17.4 Z" fill="#f0f0f0"/></svg>
<div class="a" style="left:82.38000000000011px;top:163px;width:17.40000000000009px;height:17.399999999999977px;background:linear-gradient(90deg,#f4f4f4,#9a9a9a 55%,#1a1a1a);"></div>
<div class="a" style="left:100.59999999999991px;top:163px;width:17.40000000000009px;height:17.399999999999977px;background:#ebebeb;"></div>
<div class="a" style="left:118.81999999999994px;top:163px;width:17.40000000000009px;height:17.399999999999977px;background:#d8a868;"></div>
<div class="a" style="left:137.03999999999996px;top:163px;width:17.40000000000009px;height:17.399999999999977px;background:#a9a9a9;border:1px solid #d0d0d0;box-shadow:inset 0 0 0 2px #262626"></div>
<svg class="a" style="left:9.0px;top:184px" width="18" height="18"><path d="M2 5 L7 5 L9 7 L16 7 L16 15 L2 15 Z" fill="#cfcfcf"/></svg>
<div class="a" style="left:27.720000000000027px;top:184px;width:17.40000000000009px;height:17.399999999999977px;background:#5ab6c6;"></div>
<div class="a" style="left:45.940000000000055px;top:184px;width:17.40000000000009px;height:17.399999999999977px;background:#8890c2;"></div>
<div class="a" style="left:64.16000000000008px;top:184px;width:17.40000000000009px;height:17.399999999999977px;background:#a890c2;"></div>
<svg class="a" style="left:9.0px;top:205px" width="18" height="18"><path d="M2 5 L7 5 L9 7 L16 7 L16 15 L2 15 Z" fill="#cfcfcf"/></svg>
<div class="a" style="left:27.720000000000027px;top:205px;width:17.40000000000009px;height:17.399999999999977px;background:#121212;"></div>
<div class="a" style="left:45.940000000000055px;top:205px;width:17.40000000000009px;height:17.399999999999977px;background:#282828;"></div>
<div class="a" style="left:64.16000000000008px;top:205px;width:17.40000000000009px;height:17.399999999999977px;background:#373737;"></div>
<div class="a" style="left:82.38000000000011px;top:205px;width:17.40000000000009px;height:17.399999999999977px;background:#545454;"></div>
<div class="a" style="left:100.59999999999991px;top:205px;width:17.40000000000009px;height:17.399999999999977px;background:#6c6c6c;"></div>
<div class="a" style="left:118.81999999999994px;top:205px;width:17.40000000000009px;height:17.399999999999977px;background:#888888;"></div>
<div class="a" style="left:137.03999999999996px;top:205px;width:17.40000000000009px;height:17.399999999999977px;background:#9c9c9c;"></div>
<div class="a" style="left:155.26px;top:205px;width:17.40000000000009px;height:17.399999999999977px;background:#ababab;"></div>
<div class="a" style="left:173.48000000000002px;top:205px;width:17.40000000000009px;height:17.399999999999977px;background:#bcbcbc;"></div>
<div class="a" style="left:191.70000000000005px;top:205px;width:17.40000000000009px;height:17.399999999999977px;background:#d8d8d8;"></div>
<div class="a" style="left:209.92000000000007px;top:205px;width:17.40000000000009px;height:17.399999999999977px;background:#e8e8e8;"></div>
<div class="a" style="left:0px;top:336px;width:303px;height:2px;background:#484848;"></div>
<div class="a" style="left:0px;top:338px;width:303px;height:9px;background:#575757;"></div>
<div class="a" style="left:128px;top:340px;width:38px;height:5px;background:#4a4a4a;"></div>
<svg class="a" style="left:0;top:0" width="303" height="347" viewBox="980 146 303 347"><g fill="none" stroke="#bcbcbc" stroke-width="1.6"><path d="M997 463 V477 M1001 463 V477 M1004 463 L1010 477"/><rect x="1013" y="475" width="2" height="2" fill="#bcbcbc" stroke="none"/><rect x="1034" y="462" width="13" height="14"/><path d="M1030 472 H1039 M1036 469 L1039 472 L1036 475"/><rect x="1095" y="462" width="15" height="14"/><path d="M1095 467 H1110 M1095 472 H1110 M1100 462 V476 M1105 462 V476"/><rect x="1129" y="462" width="15" height="15"/><path d="M1129 466 H1144 M1132 469.5 H1141 M1132 473 H1141"/><path d="M1162 465 H1168 L1170 467 H1179 V477 H1162 Z" fill="#bcbcbc"/><rect x="1199" y="462" width="14" height="14"/><path d="M1206 466 V472 M1203 469 H1209"/><path d="M1233 465 H1246 M1237 465 V463 H1242 V465 M1234.5 465 L1235.5 477 H1243.5 L1244.5 465 M1238 468 V474 M1241 468 V474"/></g></svg>
</div>
<div id="rpanel" class="a"></div>
<div class="a" style="left:1300px;top:85px;width:38px;height:16px;background:#545454;"></div>
<svg class="a" style="left:1331px;top:89px" width="7" height="9"><path d="M6 0.5 L1 4.5 L6 8.5 Z" fill="#cfcfcf"/></svg>
<div class="a" style="left:1300px;top:102px;width:38px;height:51px;background:#5c5c5c;border-top:1px solid #4a4a4a"></div>
<div class="a" style="left:1312px;top:105px;width:25px;height:6px;background:repeating-linear-gradient(90deg,#474747 0 2px,transparent 2px 3.5px);"></div>
<div class="a" style="left:1300px;top:155px;width:38px;height:90px;background:#5c5c5c;border-top:1px solid #4a4a4a"></div>
<div class="a" style="left:1312px;top:158px;width:25px;height:6px;background:repeating-linear-gradient(90deg,#474747 0 2px,transparent 2px 3.5px);"></div>
<div class="a" style="left:1300px;top:246px;width:38px;height:125px;background:#5c5c5c;border-top:1px solid #4a4a4a"></div>
<div class="a" style="left:1312px;top:249px;width:25px;height:6px;background:repeating-linear-gradient(90deg,#474747 0 2px,transparent 2px 3.5px);"></div>
<div class="a" style="left:1300px;top:372px;width:38px;height:54px;background:#5c5c5c;border-top:1px solid #4a4a4a"></div>
<div class="a" style="left:1312px;top:375px;width:25px;height:6px;background:repeating-linear-gradient(90deg,#474747 0 2px,transparent 2px 3.5px);"></div>
<div class="a" style="left:1300px;top:427px;width:38px;height:89px;background:#5c5c5c;border-top:1px solid #4a4a4a"></div>
<div class="a" style="left:1312px;top:430px;width:25px;height:6px;background:repeating-linear-gradient(90deg,#474747 0 2px,transparent 2px 3.5px);"></div>
<div class="a" style="left:1300px;top:516px;width:38px;height:564px;background:#5a5a5a;border-top:2px solid #474747"></div>
<svg class="a" style="left:1296px;top:85px" width="42" height="440" viewBox="1296 85 42 440">
<circle cx="1321.5" cy="128.5" r="8.3" fill="#cacaca"/><circle cx="1327.8" cy="135.3" r="7.8" fill="#9c9c9c" stroke="#c4c4c4" stroke-width="1.3"/>
<circle cx="1324.9" cy="187.2" r="7.6" fill="#d0d0d0"/><circle cx="1324.9" cy="187.2" r="10.4" fill="none" stroke="#c8c8c8" stroke-width="1.7" stroke-dasharray="2.2 2"/>
<rect x="1319" y="214.5" width="17" height="16.5" fill="none" stroke="#c8c8c8" stroke-width="1.5"/><rect x="1315" y="222.5" width="7" height="7" fill="#5c5c5c" stroke="#c8c8c8" stroke-width="1.4"/><rect x="1319" y="226.5" width="7" height="7" fill="#5c5c5c" stroke="#c8c8c8" stroke-width="1.4"/>
<path d="M1314.5 273 L1325.2 266 L1336 273 L1325.2 280 Z" fill="#cdcdcd"/><path d="M1315 279.5 L1325.2 285.5 L1335.5 279.5 L1335.5 282 L1325.2 288 L1315 282 Z" fill="#cdcdcd"/>
<path d="M1324 305 H1315 V323.5 H1334.5 V314" fill="none" stroke="#c8c8c8" stroke-width="1.7"/><path d="M1328 311 L1336 303 M1330 303 H1336 V309" fill="none" stroke="#c8c8c8" stroke-width="1.7"/>
<rect x="1313.5" y="338" width="13.5" height="17" fill="none" stroke="#c8c8c8" stroke-width="1.4"/><rect x="1318.5" y="347" width="17" height="13.5" fill="#5c5c5c" stroke="#c8c8c8" stroke-width="1.4"/>
<path d="M1319 407.5 H1331.5 V416 H1319 Z" fill="#cfcfcf"/><path d="M1322 407 L1318 396 M1325.5 407 V392 M1329 407 L1333 398" stroke="#cfcfcf" stroke-width="1.6"/><ellipse cx="1317.5" cy="394.5" rx="2.3" ry="3.6" transform="rotate(-25 1317.5 394.5)" fill="#cfcfcf"/><ellipse cx="1325.5" cy="390.5" rx="2.2" ry="3.5" fill="#cfcfcf"/><ellipse cx="1333.5" cy="396.5" rx="2.6" ry="3.2" transform="rotate(30 1333.5 396.5)" fill="#cfcfcf"/>
<path d="M1313 459 C1313 451 1320 447.5 1327 447.5 C1334 447.5 1337.8 451 1337.8 455 C1337.8 458.5 1334 458 1332.5 460 C1331.5 462 1334 464.5 1330 466 C1324 468 1313 467 1313 459 Z" fill="#cdcdcd"/><circle cx="1318" cy="457.5" r="1.7" fill="#606060"/><circle cx="1322" cy="462.5" r="1.7" fill="#606060"/><circle cx="1328" cy="462" r="1.7" fill="#606060"/><circle cx="1332" cy="454" r="1.5" fill="#606060"/><circle cx="1326" cy="452" r="1.5" fill="#606060"/>
<defs><linearGradient id="gq" x1="0" x2="1" y1="0" y2="0"><stop offset="0" stop-color="#222"/><stop offset="1" stop-color="#e0e0e0"/></linearGradient></defs>
<path d="M1315.5 483.5 C1326 484 1335 494 1335.5 503.5 H1315.5 Z" fill="url(#gq)" stroke="#d0d0d0" stroke-width="1"/>
</svg>
<div id="status" class="a">
<div class="a" style="left:0;top:0;width:52px;height:21px;background:#4a4a4a"></div>
<div class="t13" style="left:2px;top:5px;color:#e6e6e6">1</div>
<div class="a" style="left:52px;top:0;width:22px;height:21px;background:#4d4d4d"></div>
<svg class="a" style="left:57px;top:8px" width="12" height="7"><path d="M1 1 L6.0 6 L11 1" fill="none" stroke="#e6e6e6" stroke-width="1.6"/></svg>
<svg class="a" style="left:86px;top:6px" width="32" height="12"><path d="M2 1 L8 6 L2 11 Z M18 1 L24 6 L18 11 Z" fill="#6a6a6a"/><rect x="25" y="1" width="2" height="10" fill="#6a6a6a"/></svg>
<div class="t13" style="left:234px;top:6px;color:#bdbdbd">Selection</div>
<svg class="a" style="left:400px;top:7px" width="10" height="12"><path d="M1 1 L8 6 L1 11 Z" fill="#cfcfcf"/></svg>
<div class="a" style="left:414px;top:0;width:1px;height:21px;background:#555"></div>
<svg class="a" style="left:421px;top:4px" width="8" height="12"><path d="M6 1 L2 6 L6 11" fill="none" stroke="#9a9a9a" stroke-width="1.5"/></svg>
<div class="a" style="left:816px;top:2px;width:33px;height:17px;border-radius:8px;background:#5e5e5e"></div>
<svg class="a" style="left:1248px;top:4px" width="8" height="12"><path d="M2 1 L6 6 L2 11" fill="none" stroke="#9a9a9a" stroke-width="1.5"/></svg>
<div class="a" style="left:0;top:20px;width:1284px;height:3px;background:#3f3f3f"></div>
<div class="a" style="left:0;top:21px;width:97px;height:2px;background:#cfcfcf"></div>
<div class="a" style="left:1264px;top:0;width:20px;height:20px;background:#5a5a5a"></div>
</div>
<div class="a" style="left:1296px;top:1077px;width:42px;height:3px;background:#3f3f3f"></div>
</div></body></html>
